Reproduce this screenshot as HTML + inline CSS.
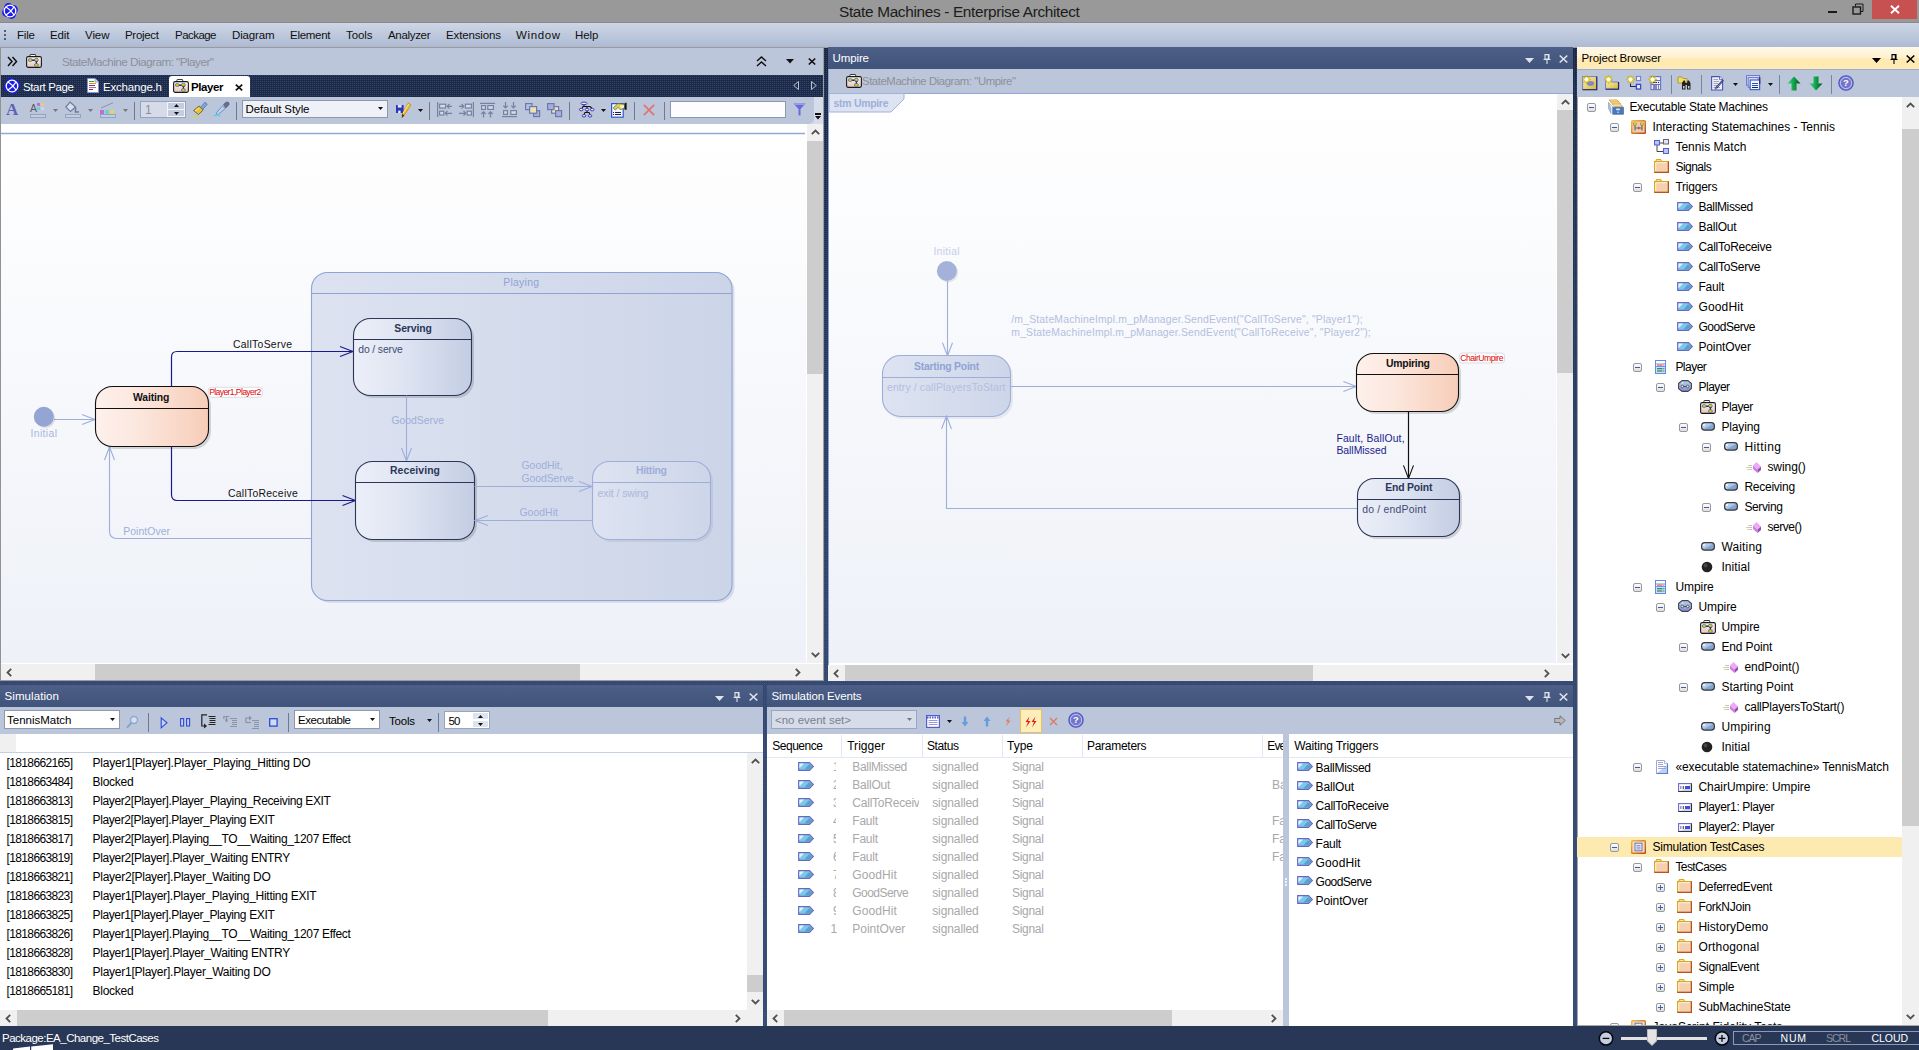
<!DOCTYPE html>
<html><head><meta charset="utf-8"><title>State Machines - Enterprise Architect</title>
<style>
*{box-sizing:border-box;margin:0;padding:0}
html,body{width:1919px;height:1050px;overflow:hidden;background:#31497a;font-family:"Liberation Sans",sans-serif;font-size:12px;color:#000}
.a{position:absolute}
.t{position:absolute;white-space:nowrap;line-height:1}
.dots{background-color:#1b2743;background-image:linear-gradient(90deg,transparent 50%,#1b2743 50%),linear-gradient(0deg,#32446a 50%,#1b2743 50%);background-size:2px 2px}
.dotov{background-image:linear-gradient(90deg,rgba(78,104,158,.42) 50%,transparent 50%);background-size:2px 2px;-webkit-mask-image:linear-gradient(0deg,#000 50%,transparent 50%);-webkit-mask-size:2px 2px;mask-image:linear-gradient(0deg,#000 50%,transparent 50%);mask-size:2px 2px}
svg{overflow:visible}
</style></head><body>
<div class="a" style="left:0;top:48px;width:1919px;height:978px;background:linear-gradient(#1b2743,#1e2d4c 6%,#2a3d64 38%,#33476f 66%,#364b74)"></div><div class="a dotov" style="left:0;top:48px;width:1919px;height:978px"></div>
<div class="a" style="left:0px;top:0px;width:1919px;height:23px;background:#999999;border-bottom:1px solid #8a8a8a"></div><svg class="a" style="left:2px;top:3px" width="16" height="16" viewBox="0 0 16 16"><circle cx="6.6" cy="4.6" r="4.5" fill="#1c1cf0"/><circle cx="11.4" cy="6.6" r="4.5" fill="#1c1cf0"/><circle cx="9.4" cy="11.4" r="4.5" fill="#1c1cf0"/><circle cx="4.6" cy="9.4" r="4.5" fill="#1c1cf0"/><circle cx="8" cy="8" r="6.6" fill="#1c1cf0"/><g fill="none" stroke="#fff" stroke-width="1.3"><circle cx="8" cy="8" r="5.8"/><path d="M4 4Q8.4 6.4 12 12M12 4Q9.6 8.4 4 12"/></g></svg><div class="t" style="left:839px;top:4px;font-size:15.4px;color:#1c1c1c;letter-spacing:-0.343px;">State Machines - Enterprise Architect</div><div class="a" style="left:1828px;top:11px;width:9px;height:2px;background:#1a1a1a;"></div><svg class="a" style="left:1852px;top:3px;" width="12" height="12" viewBox="0 0 12 12"><path d="M3.5 3.5V1H11V8.5H8.5" fill="none" stroke="#1a1a1a" stroke-width="1"/><rect x="1" y="4" width="7.5" height="7" fill="none" stroke="#1a1a1a" stroke-width="1.4"/></svg><div class="a" style="left:1872px;top:0px;width:45px;height:19px;background:#c75050;"></div><svg class="a" style="left:1890px;top:5px;" width="10" height="9" viewBox="0 0 10 9"><path d="M1 0.8L9 8.2M9 0.8L1 8.2" stroke="#fff" stroke-width="1.9"/></svg><div class="a" style="left:0px;top:23px;width:1919px;height:24px;background:linear-gradient(#ced6e6,#bcc7dc 55%,#adbad2);"></div><div class="a" style="left:0px;top:47px;width:1919px;height:1px;background:#9a9a9e;"></div><div class="a" style="left:4px;top:30px;width:2px;height:2px;background:#4f5b78;"></div><div class="a" style="left:4px;top:34px;width:2px;height:2px;background:#4f5b78;"></div><div class="a" style="left:4px;top:38px;width:2px;height:2px;background:#4f5b78;"></div><div class="t" style="left:17px;top:30px;font-size:11.5px;color:#111;letter-spacing:-0.177px;">File</div><div class="t" style="left:50px;top:30px;font-size:11.5px;color:#111;letter-spacing:-0.106px;">Edit</div><div class="t" style="left:85px;top:30px;font-size:11.5px;color:#111;letter-spacing:-0.073px;">View</div><div class="t" style="left:125px;top:30px;font-size:11.5px;color:#111;letter-spacing:-0.299px;">Project</div><div class="t" style="left:175px;top:30px;font-size:11.5px;color:#111;letter-spacing:-0.542px;">Package</div><div class="t" style="left:232px;top:30px;font-size:11.5px;color:#111;letter-spacing:-0.160px;">Diagram</div><div class="t" style="left:290px;top:30px;font-size:11.5px;color:#111;letter-spacing:-0.281px;">Element</div><div class="t" style="left:346px;top:30px;font-size:11.5px;color:#111;letter-spacing:-0.087px;">Tools</div><div class="t" style="left:388px;top:30px;font-size:11.5px;color:#111;letter-spacing:-0.321px;">Analyzer</div><div class="t" style="left:446px;top:30px;font-size:11.5px;color:#111;letter-spacing:-0.139px;">Extensions</div><div class="t" style="left:516px;top:30px;font-size:11.5px;color:#111;letter-spacing:0.620px;">Window</div><div class="t" style="left:575px;top:30px;font-size:11.5px;color:#111;letter-spacing:-0.051px;">Help</div>
<div class="a" style="left:0px;top:48px;width:823px;height:27px;background:#bbc6da;"></div><svg class="a" style="left:7px;top:56px;" width="10" height="11" viewBox="0 0 10 11"><path d="M1 1L5 5.5L1 10M5.5 1L9.5 5.5L5.5 10" fill="none" stroke="#111" stroke-width="1.5"/></svg><svg class="a" style="left:26px;top:54px;" width="16" height="14" viewBox="0 0 16 14"><defs><linearGradient id="dgi" x1="0" y1="0" x2="0" y2="1"><stop offset="0" stop-color="#fff8f6"/><stop offset="1" stop-color="#e6c2be"/></linearGradient></defs><rect x="3.9" y="0.5" width="5.8" height="2.6" rx="0.6" fill="#fafafa" stroke="#222" stroke-width="0.9"/><rect x="0.6" y="2.6" width="14.8" height="10.8" rx="1.6" fill="url(#dgi)" stroke="#1a1a1a" stroke-width="1.1"/><path d="M5 6.2H10" fill="none" stroke="#111" stroke-width="1.3"/><path d="M8.8 7L12 7L10.4 9Z" fill="#111"/><path d="M10.4 8.5V10.5" stroke="#111" stroke-width="1.2"/><ellipse cx="4.2" cy="6" rx="2" ry="1.5" fill="#d8d400" stroke="#3a5ad0" stroke-width="0.7"/><ellipse cx="10.4" cy="5.8" rx="2" ry="1.5" fill="#d8d400" stroke="#3a5ad0" stroke-width="0.7"/><ellipse cx="10.4" cy="11" rx="2" ry="1.5" fill="#d8d400" stroke="#3a5ad0" stroke-width="0.7"/></svg><div class="t" style="left:62px;top:57px;font-size:11.8px;color:#8c9099;letter-spacing:-0.566px;">StateMachine Diagram: &quot;Player&quot;</div><svg class="a" style="left:756px;top:56px;" width="11" height="11" viewBox="0 0 11 11"><path d="M1 5L5.5 1L10 5M1 10L5.5 6L10 10" fill="none" stroke="#111" stroke-width="1.5"/></svg><svg class="a" style="left:786px;top:59px;" width="8" height="5" viewBox="0 0 8 5"><path d="M0 0H8L4 4.5Z" fill="#111"/></svg><svg class="a" style="left:808px;top:58px;" width="8" height="7" viewBox="0 0 8 7"><path d="M0.8 0.5L7.2 6.5M7.2 0.5L0.8 6.5" stroke="#111" stroke-width="1.7"/></svg><svg class="a" style="left:4px;top:78px" width="16" height="16" viewBox="0 0 16 16"><circle cx="6.6" cy="4.6" r="4.5" fill="#1c1cf0"/><circle cx="11.4" cy="6.6" r="4.5" fill="#1c1cf0"/><circle cx="9.4" cy="11.4" r="4.5" fill="#1c1cf0"/><circle cx="4.6" cy="9.4" r="4.5" fill="#1c1cf0"/><circle cx="8" cy="8" r="6.6" fill="#1c1cf0"/><g fill="none" stroke="#fff" stroke-width="1.3"><circle cx="8" cy="8" r="5.8"/><path d="M4 4Q8.4 6.4 12 12M12 4Q9.6 8.4 4 12"/></g></svg><div class="t" style="left:23px;top:82px;font-size:11.5px;color:#fff;letter-spacing:-0.371px;">Start Page</div><svg class="a" style="left:87px;top:78px;" width="12" height="15" viewBox="0 0 12 15"><path d="M0.5 0.5H8L11.5 4V14.5H0.5Z" fill="#fff" stroke="#8a93c8" stroke-width="1"/><path d="M8 0.5V4H11.5" fill="#dde" stroke="#8a93c8" stroke-width="0.8"/><path d="M2 3.5H7" stroke="#3a3" stroke-width="1"/><path d="M2 5.5H9" stroke="#c9a400" stroke-width="1"/><path d="M2 7.5H8" stroke="#a0208a" stroke-width="1"/><path d="M2 9.5H9" stroke="#888" stroke-width="1"/><path d="M2 11.5H6" stroke="#a0208a" stroke-width="1"/></svg><div class="t" style="left:103px;top:82px;font-size:11.5px;color:#fff;letter-spacing:-0.194px;">Exchange.h</div><div class="a" style="left:169px;top:76px;width:81px;height:21px;background:#fff;border-radius:3px 3px 0 0"></div><svg class="a" style="left:173px;top:79px;" width="16" height="14" viewBox="0 0 16 14"><defs><linearGradient id="dgi" x1="0" y1="0" x2="0" y2="1"><stop offset="0" stop-color="#fff8f6"/><stop offset="1" stop-color="#e6c2be"/></linearGradient></defs><rect x="3.9" y="0.5" width="5.8" height="2.6" rx="0.6" fill="#fafafa" stroke="#222" stroke-width="0.9"/><rect x="0.6" y="2.6" width="14.8" height="10.8" rx="1.6" fill="url(#dgi)" stroke="#1a1a1a" stroke-width="1.1"/><path d="M5 6.2H10" fill="none" stroke="#111" stroke-width="1.3"/><path d="M8.8 7L12 7L10.4 9Z" fill="#111"/><path d="M10.4 8.5V10.5" stroke="#111" stroke-width="1.2"/><ellipse cx="4.2" cy="6" rx="2" ry="1.5" fill="#d8d400" stroke="#3a5ad0" stroke-width="0.7"/><ellipse cx="10.4" cy="5.8" rx="2" ry="1.5" fill="#d8d400" stroke="#3a5ad0" stroke-width="0.7"/><ellipse cx="10.4" cy="11" rx="2" ry="1.5" fill="#d8d400" stroke="#3a5ad0" stroke-width="0.7"/></svg><div class="t" style="left:191px;top:82px;font-size:11.5px;color:#000;letter-spacing:-0.406px;font-weight:bold;">Player</div><svg class="a" style="left:235px;top:84px;" width="8" height="7" viewBox="0 0 8 7"><path d="M0.8 0.6L7.2 6.4M7.2 0.6L0.8 6.4" stroke="#111" stroke-width="1.7"/></svg><svg class="a" style="left:793px;top:81px;" width="6" height="9" viewBox="0 0 6 9"><path d="M5.5 0.5L0.7 4.5L5.5 8.5Z" fill="none" stroke="#c9d0e0" stroke-width="0.9"/></svg><svg class="a" style="left:811px;top:81px;" width="6" height="9" viewBox="0 0 6 9"><path d="M0.5 0.5L5.3 4.5L0.5 8.5Z" fill="none" stroke="#c9d0e0" stroke-width="0.9"/></svg><div class="a" style="left:0px;top:97px;width:823px;height:27px;background:#d6dce9;"></div><div class="a" style="left:0px;top:97px;width:814px;height:27px;background:#bbc6da;border-radius:0 0 5px 0"></div><div class="a" style="left:1px;top:124px;width:806px;height:10px;background:#fff;"></div><div class="t" style="left:6px;top:101px;font-family:'Liberation Serif',serif;font-size:17px;font-weight:bold;color:#5c62b4">A</div><div class="t" style="left:30px;top:103px;font-size:10.5px;color:#565b6a;">A</div><div class="a" style="left:37px;top:103px;width:3px;height:3px;background:#c56ad0;"></div><div class="a" style="left:41px;top:103px;width:3px;height:3px;background:#e3d36c;"></div><div class="a" style="left:37px;top:107px;width:3px;height:3px;background:#6cd0d8;"></div><div class="a" style="left:41px;top:107px;width:3px;height:3px;background:#c9d7e8;"></div><div class="a" style="left:30px;top:114px;width:16px;height:4px;background:#c3cde2;border:1px solid #96a3bf"></div><svg class="a" style="left:53px;top:109px;" width="5" height="3" viewBox="0 0 5 3"><path d="M0 0H5 L2.5 3Z" fill="#777"/></svg><svg class="a" style="left:65px;top:101px;" width="16" height="13" viewBox="0 0 16 13"><path d="M5 1L10.5 6L5.5 10.5L0.8 6Z" fill="#d8e0ee" stroke="#6f7c9c" stroke-width="1.2"/><path d="M10.5 6V11H14" fill="none" stroke="#6f7c9c" stroke-width="1.6"/></svg><div class="a" style="left:65px;top:114px;width:16px;height:4px;background:#c3cde2;border:1px solid #96a3bf"></div><svg class="a" style="left:88px;top:109px;" width="5" height="3" viewBox="0 0 5 3"><path d="M0 0H5 L2.5 3Z" fill="#777"/></svg><svg class="a" style="left:100px;top:102px;" width="16" height="12" viewBox="0 0 16 12"><path d="M1 6L13 0.8" stroke="#8a94ac" stroke-width="1"/><rect x="0" y="8" width="4" height="4" fill="#c56ad0"/><rect x="5" y="8" width="4" height="4" fill="#6cd0d8"/><rect x="10" y="8" width="4" height="4" fill="#e3d36c"/></svg><div class="a" style="left:100px;top:114px;width:16px;height:4px;background:#c3cde2;border:1px solid #96a3bf"></div><svg class="a" style="left:123px;top:109px;" width="5" height="3" viewBox="0 0 5 3"><path d="M0 0H5 L2.5 3Z" fill="#777"/></svg><div class="a" style="left:134px;top:102px;width:1px;height:18px;background:#6f7a92;"></div><div class="a" style="left:140px;top:101px;width:46px;height:17px;background:#d5dbe9;border:1px solid #98a2b8"></div><div class="t" style="left:145px;top:104px;font-size:12px;color:#8b8f98;">1</div><div class="a" style="left:167px;top:102px;width:18px;height:8px;background:#c4cde0;border:1px solid #f4f6fb"></div><div class="a" style="left:167px;top:109px;width:18px;height:8px;background:#c4cde0;border:1px solid #f4f6fb"></div><svg class="a" style="left:174px;top:104px;" width="5" height="3" viewBox="0 0 5 3"><path d="M0 3H5L2.5 0Z" fill="#111"/></svg><svg class="a" style="left:174px;top:112px;" width="5" height="3" viewBox="0 0 5 3"><path d="M0 0H5L2.5 3Z" fill="#111"/></svg><svg class="a" style="left:191px;top:101px;" width="17" height="17" viewBox="0 0 17 17"><path d="M9.5 6.5L14 1.2L16.2 3.2L11.5 8.8Z" fill="#7fa8e0" stroke="#4a70b8" stroke-width="0.8"/><path d="M2.5 9.5L8.2 5L12.2 9L7.5 13.5Z" fill="#e8c040" stroke="#6a5a20" stroke-width="0.9"/><path d="M4 10L8 7" stroke="#fff0a0" stroke-width="1"/><path d="M0.5 15.5H8" stroke="#e0d820" stroke-width="1.6" stroke-dasharray="1.4 0.8"/></svg><svg class="a" style="left:213px;top:101px;" width="17" height="17" viewBox="0 0 17 17"><path d="M10.5 3.5L13 1.2Q15 0.4 16 2Q16.6 3.8 15 4.8L12.8 7Z" fill="#66708c" stroke="#4a5470" stroke-width="0.6"/><path d="M9.5 4.8L12.2 7.6L5.5 13.2L3.2 13.8L3.8 11.4Z" fill="#b8d4f0" stroke="#5f80b8" stroke-width="0.8"/><path d="M0.8 15.2Q4 12.6 7.4 15.2" fill="none" stroke="#5fd0e0" stroke-width="1.5"/></svg><div class="a" style="left:236px;top:102px;width:1px;height:18px;background:#6f7a92;"></div><div class="a" style="left:242px;top:100px;width:146px;height:18px;background:#eff1f8;border:1px solid #8e98ad"></div><div class="t" style="left:245.5px;top:104px;font-size:11.5px;color:#000;letter-spacing:-0.100px;">Default Style</div><svg class="a" style="left:378px;top:107px;" width="5" height="3" viewBox="0 0 5 3"><path d="M0 0H5 L2.5 3Z" fill="#111"/></svg><svg class="a" style="left:395px;top:102px;" width="17" height="17" viewBox="0 0 17 17"><rect x="1" y="3" width="7.6" height="8" fill="#2a34b8"/><rect x="2.8" y="3" width="3.8" height="2.6" fill="#dfe4ff"/><rect x="3.2" y="8.6" width="2.4" height="2.4" fill="#eef0ff"/><path d="M13.3 1L16 2.8L9.3 13.2L7 15.8L7.2 12Z" fill="#f5c020" stroke="#b07a10" stroke-width="0.6"/><path d="M7.2 12L9.3 13.2L7 15.8Z" fill="#3a2a10"/><path d="M13.6 2.2L8.2 11" stroke="#fff0a0" stroke-width="0.9"/></svg><svg class="a" style="left:418px;top:109px;" width="5" height="3" viewBox="0 0 5 3"><path d="M0 0H5 L2.5 3Z" fill="#111"/></svg><div class="a" style="left:429px;top:102px;width:1px;height:18px;background:#6f7a92;"></div><svg class="a" style="left:437px;top:102px;" width="16" height="16" viewBox="0 0 16 16"><path d="M0.6 0V15" stroke="#7680a0" stroke-width="1.2" fill="none"/><rect x="2.6" y="2.2" width="6" height="3.8" fill="#d3dbec" stroke="#7680a0" stroke-width="1.2"/><rect x="2.6" y="9.2" width="4.2" height="3.8" fill="#d3dbec" stroke="#7680a0" stroke-width="1.2"/><path d="M15 4.3H10.5M12.5 2L10.2 4.3L12.5 6.6M15 11.3H8.5M10.5 9L8.2 11.3L10.5 13.6" stroke="#7680a0" stroke-width="1.2" fill="none"/></svg><svg class="a" style="left:458px;top:102px;" width="16" height="16" viewBox="0 0 16 16"><path d="M15.4 0V15" stroke="#7680a0" stroke-width="1.2" fill="none"/><rect x="7.4" y="2.2" width="6" height="3.8" fill="#d3dbec" stroke="#7680a0" stroke-width="1.2"/><rect x="9.2" y="9.2" width="4.2" height="3.8" fill="#d3dbec" stroke="#7680a0" stroke-width="1.2"/><path d="M1 4.3H5.5M3.5 2L5.8 4.3L3.5 6.6M1 11.3H7.5M5.5 9L7.8 11.3L5.5 13.6" stroke="#7680a0" stroke-width="1.2" fill="none"/></svg><svg class="a" style="left:480px;top:102px;" width="16" height="16" viewBox="0 0 16 16"><path d="M0 1.4H15" stroke="#7680a0" stroke-width="1.2" fill="none"/><rect x="1.6" y="3.6" width="3.8" height="3.8" fill="#d3dbec" stroke="#7680a0" stroke-width="1.2"/><rect x="7.8" y="3.6" width="5.6" height="3.8" fill="#d3dbec" stroke="#7680a0" stroke-width="1.2"/><path d="M3.5 15.5V10M1.3 12L3.5 9.8L5.7 12M10.5 15.5V10M8.3 12L10.5 9.8L12.7 12" stroke="#7680a0" stroke-width="1.2" fill="none"/></svg><svg class="a" style="left:502px;top:102px;" width="16" height="16" viewBox="0 0 16 16"><path d="M0 14.6H15" stroke="#7680a0" stroke-width="1.2" fill="none"/><rect x="1.6" y="8.6" width="3.8" height="3.8" fill="#d3dbec" stroke="#7680a0" stroke-width="1.2"/><rect x="8.8" y="8.6" width="5.6" height="3.8" fill="#d3dbec" stroke="#7680a0" stroke-width="1.2"/><path d="M3.5 0V5.6M1.3 3.6L3.5 5.8L5.7 3.6M11.5 0V5.6M9.3 3.6L11.5 5.8L13.7 3.6" stroke="#7680a0" stroke-width="1.2" fill="none"/></svg><svg class="a" style="left:525px;top:103px;" width="16" height="15" viewBox="0 0 16 15"><rect x="0.6" y="0.6" width="6.4" height="6" fill="#b4c0e4" stroke="#6f76b0" stroke-width="1.2"/><rect x="8.6" y="7.6" width="6" height="6" fill="#a4b0dc" stroke="#6f76b0" stroke-width="1.2"/><rect x="4.6" y="3.6" width="7" height="6.6" fill="#ece4b0" stroke="#6f76b0" stroke-width="1.2"/></svg><svg class="a" style="left:547px;top:103px;" width="16" height="15" viewBox="0 0 16 15"><rect x="4.6" y="3.6" width="7" height="6.6" fill="#ece4b0" stroke="#6f76b0" stroke-width="1.2"/><rect x="0.6" y="0.6" width="6.4" height="6" fill="#a4b0dc" stroke="#6f76b0" stroke-width="1.2"/><rect x="8.6" y="7.6" width="6" height="6" fill="#a4b0dc" stroke="#6f76b0" stroke-width="1.2"/></svg><div class="a" style="left:569px;top:102px;width:1px;height:18px;background:#6f7a92;"></div><svg class="a" style="left:579px;top:102px;" width="16" height="16" viewBox="0 0 16 16"><path d="M5 3V4.5M3 6.5L4 4.5H11L13 6.5M8 4.5V6.5M8 9V10.5M5 12.5L6 10.5H10L11 12.5" fill="none" stroke="#111" stroke-width="1.1"/><ellipse cx="5" cy="1.4" rx="3" ry="1.3" fill="#e8f0ff" stroke="#2a1aa0" stroke-width="0.85"/><ellipse cx="2.2" cy="7.6" rx="1.8" ry="1.25" fill="#e8f0ff" stroke="#2a1aa0" stroke-width="0.85"/><ellipse cx="8" cy="7.6" rx="1.8" ry="1.25" fill="#e8f0ff" stroke="#2a1aa0" stroke-width="0.85"/><ellipse cx="13.2" cy="7.6" rx="1.8" ry="1.25" fill="#e8f0ff" stroke="#2a1aa0" stroke-width="0.85"/><ellipse cx="5" cy="13.8" rx="1.8" ry="1.25" fill="#e8f0ff" stroke="#2a1aa0" stroke-width="0.85"/><ellipse cx="11" cy="13.8" rx="1.8" ry="1.25" fill="#e8f0ff" stroke="#2a1aa0" stroke-width="0.85"/></svg><svg class="a" style="left:601px;top:109px;" width="5" height="3" viewBox="0 0 5 3"><path d="M0 0H5 L2.5 3Z" fill="#111"/></svg><svg class="a" style="left:611px;top:102px;" width="17" height="16" viewBox="0 0 17 16"><rect x="0.6" y="1.6" width="11.6" height="13.6" fill="#f4f6fe" stroke="#2a5ad0" stroke-width="1.2"/><path d="M4 10.5H10M4 12.5H10" stroke="#1c1c50" stroke-width="1.1"/><path d="M2 10.5H3M2 12.5H3" stroke="#1c1c50" stroke-width="1.1"/><path d="M2.2 6L6.8 1.6L13.6 2.2V6.2L9.2 7.6L7 5.4L4.4 8Z" fill="#d8d060" stroke="#6a6420" stroke-width="0.7"/><path d="M9 3L13 3.4V5.6L10 6.4Z" fill="#f8f4c8"/><rect x="13.6" y="0.8" width="2" height="7" fill="#111"/></svg><div class="a" style="left:634px;top:102px;width:1px;height:18px;background:#6f7a92;"></div><svg class="a" style="left:643px;top:104px;" width="12" height="12" viewBox="0 0 12 12"><path d="M0.8 0.8L11.2 11.2M11.2 0.8L0.8 11.2" stroke="#e07272" stroke-width="1.7"/></svg><div class="a" style="left:664px;top:102px;width:1px;height:18px;background:#6f7a92;"></div><div class="a" style="left:670px;top:101px;width:116px;height:17px;background:#fdfdff;border:1px solid #8e98ad"></div><svg class="a" style="left:793px;top:103px;" width="13" height="13" viewBox="0 0 13 13"><path d="M0.5 0.5H12.5L7.5 6V12.5H5.5V6Z" fill="#6a6ad8"/><path d="M0.5 0.5H12.5L11 2H2Z" fill="#9a9aee"/></svg><div class="a" style="left:815px;top:113px;width:6px;height:1.5px;background:#111;"></div><svg class="a" style="left:815px;top:116px;" width="6" height="4" viewBox="0 0 6 4"><path d="M0 0H6L3 3.5Z" fill="#111"/></svg><div class="a" style="left:0px;top:48px;width:1px;height:633px;background:#929292;"></div>
<div class="a" style="left:1px;top:124px;width:805px;height:539px;background:linear-gradient(#ffffff,#eef1f8);"></div>
<div class="a" style="left:806px;top:124px;width:1px;height:539px;background:#fff;"></div>
<div class="a" style="left:807px;top:124px;width:16px;height:539px;background:#f0f0f0;"></div><div class="a" style="left:807px;top:141px;width:16px;height:233px;background:#cdcdcd;"></div><svg class="a" style="left:810.5px;top:129px;" width="9" height="6" viewBox="0 0 9 6"><path d="M0.8 5.2L4.5 1.5L8.2 5.2" fill="none" stroke="#505050" stroke-width="1.8"/></svg><svg class="a" style="left:810.5px;top:652px;" width="9" height="6" viewBox="0 0 9 6"><path d="M0.8 0.8L4.5 4.5L8.2 0.8" fill="none" stroke="#505050" stroke-width="1.8"/></svg>
<div class="a" style="left:1px;top:663px;width:822px;height:1px;background:#fff;"></div>
<div class="a" style="left:1px;top:664px;width:806px;height:16px;background:#f0f0f0;"></div><div class="a" style="left:95px;top:664px;width:485px;height:16px;background:#cdcdcd;"></div><svg class="a" style="left:6px;top:667.5px;" width="6" height="9" viewBox="0 0 6 9"><path d="M5.2 0.8L1.5 4.5L5.2 8.2" fill="none" stroke="#505050" stroke-width="1.8"/></svg><svg class="a" style="left:795px;top:667.5px;" width="6" height="9" viewBox="0 0 6 9"><path d="M0.8 0.8L4.5 4.5L0.8 8.2" fill="none" stroke="#505050" stroke-width="1.8"/></svg>
<div class="a" style="left:807px;top:664px;width:16px;height:16px;background:#f0f0f0;"></div>
<div class="a" style="left:823px;top:48px;width:1px;height:633px;background:#9c9c9c;"></div>
<div class="a" style="left:0px;top:680px;width:824px;height:1px;background:#9c9c9c;"></div>
<svg class="a" style="left:0;top:124px;font-family:'Liberation Sans',sans-serif" width="806" height="539" viewBox="0 124 806 539"><defs>
<linearGradient id="gp" x1="0" x2="1" y1="0" y2="0"><stop offset="0" stop-color="#fdf0eb"/><stop offset="0.35" stop-color="#fce8df"/><stop offset="1" stop-color="#f7cdb8"/></linearGradient>
<linearGradient id="gb" x1="0" x2="1" y1="0" y2="0"><stop offset="0" stop-color="#eceff8"/><stop offset="0.4" stop-color="#dfe5f2"/><stop offset="1" stop-color="#c3cde3"/></linearGradient>
<linearGradient id="gf" x1="0" x2="1" y1="0" y2="0"><stop offset="0" stop-color="#dde3f1"/><stop offset="1" stop-color="#cdd6e9"/></linearGradient>
<linearGradient id="gpl" x1="0" x2="1" y1="0" y2="0"><stop offset="0" stop-color="#dce2f0"/><stop offset="1" stop-color="#ccd5e8"/></linearGradient>
</defs><path d="M1 133.5H805" stroke="#93a8d8" stroke-width="1.4"/><rect x="313.8" y="274.8" width="420.7" height="328" rx="16" fill="#8090c0" opacity="0.25"/><rect x="311.5" y="272.5" width="420.5" height="328" rx="16" fill="url(#gpl)" stroke="#8fa3d4" stroke-width="1.1"/><path d="M311.5 293.5H732" stroke="#8fa3d4" stroke-width="1"/><text x="503.3" y="285.6" font-size="10.4" fill="#8fa3d4" letter-spacing="0.265">Playing</text><path d="M311 538.5H117Q109.5 538.5 109.5 531V447" fill="none" stroke="#9eaedb" stroke-width="1.1"/><path d="M104.5 460L109.5 447L114.5 460" fill="none" stroke="#9eaedb" stroke-width="1.1"/><text x="123.3" y="535.1" font-size="10.4" fill="#9eaedb" letter-spacing="0.057">PointOver</text><path d="M54 419.5H95" stroke="#9eaedb" stroke-width="1.1"/><path d="M82 414.5L95 419.5L82 424.5" fill="none" stroke="#9eaedb" stroke-width="1.1"/><circle cx="45.3" cy="418.3" r="10" fill="#000" opacity="0.1"/><circle cx="43.8" cy="416.8" r="10" fill="#94a5d3"/><text x="30.5" y="437.1" font-size="10.4" fill="#aab7da" letter-spacing="0.370">Initial</text><rect x="98" y="389" width="113" height="60" rx="17" fill="#000" opacity="0.14"/><rect x="95.5" y="386.5" width="113" height="60" rx="17" fill="url(#gp)" stroke="#111" stroke-width="1.1"/><path d="M95.5 408.5H208.5" stroke="#111" stroke-width="1.1"/><text x="133" y="400.6" font-size="10.4" fill="#111" letter-spacing="-0.144" font-weight="bold">Waiting</text><rect x="208.2" y="387.3" width="54.1" height="10" rx="3" fill="#fff" stroke="#dcdce4" stroke-width="1"/><text x="209.2" y="395.1" font-size="8.6" fill="#dc0808" letter-spacing="-0.615">Player1,Player2</text><path d="M171.5 386.5V357Q171.5 351.5 177 351.5H352.8" fill="none" stroke="#1a1a8c" stroke-width="1.2"/><path d="M340 346.5L353 351.5L340 356.5" fill="none" stroke="#1a1a8c" stroke-width="1.1"/><text x="233" y="347.6" font-size="10.4" fill="#111" letter-spacing="0.293">CallToServe</text><path d="M171.5 446.5V494.5Q171.5 500.5 177 500.5H355.4" fill="none" stroke="#1a1a8c" stroke-width="1.2"/><path d="M342.5 495.5L355.5 500.5L342.5 505.5" fill="none" stroke="#1a1a8c" stroke-width="1.1"/><text x="228" y="496.6" font-size="10.4" fill="#111" letter-spacing="0.277">CallToReceive</text><rect x="356" y="321" width="118" height="77" rx="17" fill="#000" opacity="0.14"/><rect x="353.5" y="318.5" width="118" height="77" rx="17" fill="url(#gb)" stroke="#2b3658" stroke-width="1.1"/><path d="M353.5 339.5H471.5" stroke="#2b3658" stroke-width="1.1"/><text x="394.3" y="331.6" font-size="10.4" fill="#2b3658" letter-spacing="-0.075" font-weight="bold">Serving</text><text x="358.3" y="353.2" font-size="10.4" fill="#3d4a75" letter-spacing="-0.130">do / serve</text><path d="M406.5 395.5V460.5" stroke="#9eaedb" stroke-width="1.1"/><path d="M401.5 448L406.5 461L411.5 448" fill="none" stroke="#9eaedb" stroke-width="1.1"/><text x="391.5" y="424.2" font-size="10.4" fill="#9eaedb" letter-spacing="-0.014">GoodServe</text><rect x="358" y="464" width="119" height="78" rx="17" fill="#000" opacity="0.14"/><rect x="355.5" y="461.5" width="119" height="78" rx="17" fill="url(#gb)" stroke="#2b3658" stroke-width="1.1"/><path d="M355.5 482.5H474.5" stroke="#2b3658" stroke-width="1.1"/><text x="390" y="474.2" font-size="10.4" fill="#2b3658" letter-spacing="0.109" font-weight="bold">Receiving</text><rect x="595" y="464" width="118" height="78" rx="17" fill="#000" opacity="0.06"/><rect x="592.5" y="461.5" width="118" height="78" rx="17" fill="url(#gf)" stroke="#9eaedb" stroke-width="1.1"/><path d="M592.5 482.5H710.5" stroke="#9eaedb" stroke-width="1.1"/><text x="636" y="474.2" font-size="10.4" fill="#9eaedb" letter-spacing="-0.354" font-weight="bold">Hitting</text><text x="597.6" y="496.5" font-size="10.4" fill="#aab7da" letter-spacing="-0.031">exit / swing</text><path d="M474.5 486.5H592" stroke="#9eaedb" stroke-width="1.1"/><path d="M579 481.5L592 486.5L579 491.5" fill="none" stroke="#9eaedb" stroke-width="1.1"/><text x="521.5" y="469.2" font-size="10.4" fill="#9eaedb" letter-spacing="0.008">GoodHit,</text><text x="521.5" y="481.6" font-size="10.4" fill="#9eaedb" letter-spacing="-0.064">GoodServe</text><path d="M474.5 520.5H592" stroke="#9eaedb" stroke-width="1.1"/><path d="M488 515.5L475 520.5L488 525.5" fill="none" stroke="#9eaedb" stroke-width="1.1"/><text x="519.4" y="516.3" font-size="10.4" fill="#9eaedb" letter-spacing="0.075">GoodHit</text></svg>
<div class="a" style="left:828px;top:47px;width:745px;height:22px;background:linear-gradient(#4d5f86,#40537b);"></div><div class="a" style="left:828px;top:69px;width:1px;height:612px;background:#8ea2d2;"></div><div class="t" style="left:832.5px;top:53px;font-size:11.5px;color:#fff;letter-spacing:-0.112px;">Umpire</div><svg class="a" style="left:1525px;top:58px;" width="9" height="5" viewBox="0 0 9 5"><path d="M0 0H9L4.5 5Z" fill="#dfe3ec"/></svg><svg class="a" style="left:1543px;top:54px;" width="8" height="10" viewBox="0 0 8 10"><path d="M2 0.6H6V5H2Z M0.5 5.5H7.5 M4 5.5V10" fill="none" stroke="#dfe3ec" stroke-width="1.1"/><path d="M5.4 0.6V5" stroke="#dfe3ec" stroke-width="1.2"/></svg><svg class="a" style="left:1559px;top:55px;" width="9" height="8" viewBox="0 0 9 8"><path d="M0.7 0.5L8.3 7.5M8.3 0.5L0.7 7.5" stroke="#dfe3ec" stroke-width="1.6"/></svg><div class="a" style="left:829px;top:69px;width:744px;height:24px;background:#bbc6da;"></div><div class="a" style="left:829px;top:93px;width:744px;height:1px;background:#93a8d8;"></div><svg class="a" style="left:846px;top:74px;" width="16" height="14" viewBox="0 0 16 14"><defs><linearGradient id="dgi" x1="0" y1="0" x2="0" y2="1"><stop offset="0" stop-color="#fff8f6"/><stop offset="1" stop-color="#e6c2be"/></linearGradient></defs><rect x="3.9" y="0.5" width="5.8" height="2.6" rx="0.6" fill="#fafafa" stroke="#222" stroke-width="0.9"/><rect x="0.6" y="2.6" width="14.8" height="10.8" rx="1.6" fill="url(#dgi)" stroke="#1a1a1a" stroke-width="1.1"/><path d="M5 6.2H10" fill="none" stroke="#111" stroke-width="1.3"/><path d="M8.8 7L12 7L10.4 9Z" fill="#111"/><path d="M10.4 8.5V10.5" stroke="#111" stroke-width="1.2"/><ellipse cx="4.2" cy="6" rx="2" ry="1.5" fill="#d8d400" stroke="#3a5ad0" stroke-width="0.7"/><ellipse cx="10.4" cy="5.8" rx="2" ry="1.5" fill="#d8d400" stroke="#3a5ad0" stroke-width="0.7"/><ellipse cx="10.4" cy="11" rx="2" ry="1.5" fill="#d8d400" stroke="#3a5ad0" stroke-width="0.7"/></svg><div class="t" style="left:862px;top:76px;font-size:11.3px;color:#8c9099;letter-spacing:-0.402px;">StateMachine Diagram: &quot;Umpire&quot;</div><div class="a" style="left:829px;top:94px;width:727px;height:570px;background:linear-gradient(#ffffff,#eef1f8);"></div><div class="a" style="left:1556px;top:94px;width:1px;height:570px;background:#fff;"></div><div class="a" style="left:1557px;top:94px;width:16px;height:570px;background:#f0f0f0;"></div><div class="a" style="left:1557px;top:110px;width:16px;height:263px;background:#cdcdcd;"></div><svg class="a" style="left:1560.5px;top:99px;" width="9" height="6" viewBox="0 0 9 6"><path d="M0.8 5.2L4.5 1.5L8.2 5.2" fill="none" stroke="#505050" stroke-width="1.8"/></svg><svg class="a" style="left:1560.5px;top:653px;" width="9" height="6" viewBox="0 0 9 6"><path d="M0.8 0.8L4.5 4.5L8.2 0.8" fill="none" stroke="#505050" stroke-width="1.8"/></svg><div class="a" style="left:829px;top:663px;width:744px;height:2px;background:#fff;"></div><div class="a" style="left:828px;top:665px;width:728px;height:16px;background:#f0f0f0;"></div><div class="a" style="left:845px;top:665px;width:468px;height:16px;background:#cdcdcd;"></div><svg class="a" style="left:833px;top:668.5px;" width="6" height="9" viewBox="0 0 6 9"><path d="M5.2 0.8L1.5 4.5L5.2 8.2" fill="none" stroke="#505050" stroke-width="1.8"/></svg><svg class="a" style="left:1544px;top:668.5px;" width="6" height="9" viewBox="0 0 6 9"><path d="M0.8 0.8L4.5 4.5L0.8 8.2" fill="none" stroke="#505050" stroke-width="1.8"/></svg><div class="a" style="left:1556px;top:665px;width:17px;height:16px;background:#f0f0f0;"></div>
<svg class="a" style="left:829px;top:93px;font-family:'Liberation Sans',sans-serif" width="727" height="571" viewBox="829 93 727 571"><defs>
<linearGradient id="gp" x1="0" x2="1" y1="0" y2="0"><stop offset="0" stop-color="#fdf0eb"/><stop offset="0.35" stop-color="#fce8df"/><stop offset="1" stop-color="#f7cdb8"/></linearGradient>
<linearGradient id="gb" x1="0" x2="1" y1="0" y2="0"><stop offset="0" stop-color="#eceff8"/><stop offset="0.4" stop-color="#dfe5f2"/><stop offset="1" stop-color="#c3cde3"/></linearGradient>
<linearGradient id="gf" x1="0" x2="1" y1="0" y2="0"><stop offset="0" stop-color="#dde3f1"/><stop offset="1" stop-color="#cdd6e9"/></linearGradient>
<linearGradient id="gpl" x1="0" x2="1" y1="0" y2="0"><stop offset="0" stop-color="#dce2f0"/><stop offset="1" stop-color="#ccd5e8"/></linearGradient>
</defs><path d="M829 93.5H904V99L891 112H829Z" fill="#dde3f0" stroke="#9fb2dd" stroke-width="1"/><text x="833.5" y="106.6" font-size="10.4" fill="#9eaedb" letter-spacing="-0.246" font-weight="bold">stm Umpire</text><text x="933.4" y="255.3" font-size="10.4" fill="#c5cde7" letter-spacing="0.320">Initial</text><circle cx="948.4" cy="272.5" r="10" fill="#000" opacity="0.08"/><circle cx="946.9" cy="271" r="10" fill="#a4b2da"/><path d="M947.5 281V355.5" stroke="#9eaedb" stroke-width="1.1"/><path d="M942.5 342.7L947.5 355.7L952.5 342.7" fill="none" stroke="#9eaedb" stroke-width="1.1"/><rect x="885" y="358" width="128" height="61" rx="18" fill="#000" opacity="0.06"/><rect x="882.5" y="355.5" width="128" height="61" rx="18" fill="url(#gf)" stroke="#9eaedb" stroke-width="1.1"/><path d="M882.5 377.5H1010.5" stroke="#9eaedb" stroke-width="1.1"/><text x="914" y="369.5" font-size="10.4" fill="#8fa3d4" letter-spacing="-0.229" font-weight="bold">Starting Point</text><text x="887" y="391.4" font-size="10.4" fill="#b3bfdf" letter-spacing="0.139">entry / callPlayersToStart</text><path d="M1010.5 386.5H1356.4" stroke="#9eaedb" stroke-width="1.1"/><path d="M1343.4 381.5L1356.4 386.5L1343.4 391.5" fill="none" stroke="#9eaedb" stroke-width="1.1"/><text x="1011.3" y="322.8" font-size="10.4" fill="#b3bfdf" letter-spacing="0.183">/m_StateMachineImpl.m_pManager.SendEvent(&quot;CallToServe&quot;, &quot;Player1&quot;);</text><text x="1011.3" y="335.6" font-size="10.4" fill="#b3bfdf" letter-spacing="0.187">m_StateMachineImpl.m_pManager.SendEvent(&quot;CallToReceive&quot;, &quot;Player2&quot;);</text><rect x="1359" y="356" width="102" height="58" rx="17" fill="#000" opacity="0.14"/><rect x="1356.5" y="353.5" width="102" height="58" rx="17" fill="url(#gp)" stroke="#111" stroke-width="1.1"/><path d="M1356.5 374.5H1458.5" stroke="#111" stroke-width="1.1"/><text x="1386" y="366.8" font-size="10.4" fill="#111" letter-spacing="-0.235" font-weight="bold">Umpiring</text><rect x="1459.3" y="353" width="45.2" height="10" rx="3" fill="#fff" stroke="#dcdce4" stroke-width="1"/><text x="1460.3" y="360.8" font-size="8.6" fill="#dc0808" letter-spacing="-0.507">ChairUmpire</text><path d="M1408.5 411.5V478.4" stroke="#111" stroke-width="1.2"/><path d="M1403.5 465.4L1408.5 478.4L1413.5 465.4" fill="none" stroke="#111" stroke-width="1.1"/><text x="1336.4" y="441.6" font-size="10.4" fill="#1a1a8c" letter-spacing="0.165">Fault, BallOut,</text><text x="1336.4" y="454.3" font-size="10.4" fill="#1a1a8c" letter-spacing="-0.021">BallMissed</text><path d="M1357.2 508.5H946.5V416" fill="none" stroke="#9eaedb" stroke-width="1.1"/><path d="M941.5 429L946.5 416L951.5 429" fill="none" stroke="#9eaedb" stroke-width="1.1"/><rect x="1360" y="481" width="102" height="58" rx="17" fill="#000" opacity="0.14"/><rect x="1357.5" y="478.5" width="102" height="58" rx="17" fill="url(#gb)" stroke="#2b3658" stroke-width="1.1"/><path d="M1357.5 499.5H1459.5" stroke="#2b3658" stroke-width="1.1"/><text x="1385.3" y="491.3" font-size="10.4" fill="#2b3658" letter-spacing="-0.179" font-weight="bold">End Point</text><text x="1362.2" y="513.3" font-size="10.4" fill="#3d4a75" letter-spacing="0.225">do / endPoint</text></svg>
<div class="a" style="left:1577px;top:47px;width:342px;height:22px;background:linear-gradient(#fff9ea,#fff1cf 48%,#feeab2 52%,#feeab2);"></div><div class="a" style="left:1577px;top:69px;width:342px;height:1px;background:#9fadca;"></div><div class="t" style="left:1581.5px;top:53px;font-size:11.5px;color:#000;letter-spacing:-0.119px;">Project Browser</div><svg class="a" style="left:1872px;top:58px;" width="9" height="5" viewBox="0 0 9 5"><path d="M0 0H9L4.5 5Z" fill="#000"/></svg><svg class="a" style="left:1890px;top:54px;" width="8" height="10" viewBox="0 0 8 10"><path d="M2 0.6H6V5H2Z M0.5 5.5H7.5 M4 5.5V10" fill="none" stroke="#000" stroke-width="1.1"/><path d="M5.4 0.6V5" stroke="#000" stroke-width="1.2"/></svg><svg class="a" style="left:1906px;top:55px;" width="9" height="8" viewBox="0 0 9 8"><path d="M0.7 0.5L8.3 7.5M8.3 0.5L0.7 7.5" stroke="#000" stroke-width="1.6"/></svg><div class="a" style="left:1577px;top:70px;width:342px;height:27px;background:#bbc6da;"></div><svg class="a" style="left:1582px;top:75px;" width="16" height="16" viewBox="0 0 16 16"><defs><linearGradient id="yg" x1="0" y1="0" x2="1" y2="1"><stop offset="0" stop-color="#fbf6b8"/><stop offset="1" stop-color="#d4b830"/></linearGradient></defs><rect x="0.6" y="1.6" width="14" height="13" fill="url(#yg)" stroke="#7878d0" stroke-width="1"/><path d="M0.6 14.8H14.8V1.6" fill="none" stroke="#22225a" stroke-width="1.1"/><ellipse cx="8.5" cy="8.5" rx="3.6" ry="2.4" fill="#8a84d0"/><path d="M4.5 0L5.4 2.4L7.7 1.3L6.6 3.6L9 4.5L6.6 5.4L7.7 7.7L5.4 6.6L4.5 9L3.6 6.6L1.3 7.7L2.4 5.4L0 4.5L2.4 3.6L1.3 1.3L3.6 2.4Z" fill="#f0dc20" stroke="#b89c00" stroke-width="0.4"/><circle cx="4.5" cy="4.5" r="2" fill="#fff"/></svg><svg class="a" style="left:1604px;top:75px;" width="16" height="16" viewBox="0 0 16 16"><path d="M1.6 5.5H7L8.5 7H14.4V14H1.6Z" fill="url(#yg)" stroke="#7878d0" stroke-width="1"/><path d="M1.6 14.2H14.6V7" fill="none" stroke="#22225a" stroke-width="1.1"/><path d="M4.5 0L5.4 2.4L7.7 1.3L6.6 3.6L9 4.5L6.6 5.4L7.7 7.7L5.4 6.6L4.5 9L3.6 6.6L1.3 7.7L2.4 5.4L0 4.5L2.4 3.6L1.3 1.3L3.6 2.4Z" fill="#f0dc20" stroke="#b89c00" stroke-width="0.4"/><circle cx="4.5" cy="4.5" r="2" fill="#fff"/></svg><svg class="a" style="left:1626px;top:75px;" width="16" height="16" viewBox="0 0 16 16"><path d="M4.5 7V11.5H10" fill="none" stroke="#22225a" stroke-width="1.1"/><rect x="10.4" y="1.4" width="4.2" height="4.2" fill="#e8eefc" stroke="#7878d0" stroke-width="1"/><rect x="10.4" y="9.4" width="4.2" height="4.6" fill="#e8eefc" stroke="#3848c8" stroke-width="1.3"/><path d="M4.5 0L5.4 2.4L7.7 1.3L6.6 3.6L9 4.5L6.6 5.4L7.7 7.7L5.4 6.6L4.5 9L3.6 6.6L1.3 7.7L2.4 5.4L0 4.5L2.4 3.6L1.3 1.3L3.6 2.4Z" fill="#f0dc20" stroke="#b89c00" stroke-width="0.4"/><circle cx="4.5" cy="4.5" r="2" fill="#fff"/></svg><svg class="a" style="left:1648px;top:75px;" width="16" height="16" viewBox="0 0 16 16"><rect x="3" y="1.6" width="9.6" height="13" fill="#e8eefc" stroke="#6a70c8" stroke-width="1.1"/><path d="M3 5.5H12.6M3 9.5H12.6" stroke="#6a70c8" stroke-width="1"/><path d="M5 7.5H9M5 11H9M5 13H9" stroke="#22225a" stroke-width="1.1"/><path d="M10 7.5H11M10 11H11M10 13H11" stroke="#22225a" stroke-width="1.1"/><path d="M4.5 0L5.4 2.4L7.7 1.3L6.6 3.6L9 4.5L6.6 5.4L7.7 7.7L5.4 6.6L4.5 9L3.6 6.6L1.3 7.7L2.4 5.4L0 4.5L2.4 3.6L1.3 1.3L3.6 2.4Z" fill="#f0dc20" stroke="#b89c00" stroke-width="0.4"/><circle cx="4.5" cy="4.5" r="2" fill="#fff"/></svg><div class="a" style="left:1671px;top:75px;width:1px;height:19px;background:#7a859d;"></div><svg class="a" style="left:1677px;top:75px;" width="17" height="16" viewBox="0 0 17 16"><path d="M1 2H5L6 3.5H10V8H1Z" fill="#f0e060" stroke="#a89020" stroke-width="0.8"/><path d="M5 14.5V8L6.5 5.5H8L8.5 8H10L10.5 5.5H12L13.5 8V14.5H10V10H8.5V14.5Z" fill="#222"/><rect x="6" y="11" width="1.5" height="2.5" fill="#ccc"/><rect x="11" y="11" width="1.5" height="2.5" fill="#ccc"/></svg><div class="a" style="left:1701px;top:75px;width:1px;height:19px;background:#7a859d;"></div><svg class="a" style="left:1711px;top:76px;" width="14" height="15" viewBox="0 0 14 15"><path d="M0.6 0.6H8.5L11.6 3.6V14H0.6Z" fill="#eef0fb" stroke="#4a54b0" stroke-width="1.1"/><path d="M8.5 0.6V3.6H11.6" fill="#fff" stroke="#4a54b0" stroke-width="0.8"/><path d="M2.5 3.5H7M2.5 5.5H8M2.5 7.5H7M2.5 9.5H6M2.5 11.5H9" stroke="#9a9aa8" stroke-width="0.9"/><path d="M12.2 4.2L5 12.2" stroke="#1c2470" stroke-width="2"/><path d="M12 4.4L5.6 11.6" stroke="#c8d0f8" stroke-width="0.6"/><path d="M5 12.2L4.2 13.4" stroke="#3a70e0" stroke-width="1.6"/></svg><svg class="a" style="left:1733px;top:83px;" width="5" height="3" viewBox="0 0 5 3"><path d="M0 0H5 L2.5 3Z" fill="#111"/></svg><svg class="a" style="left:1746px;top:75px;" width="17" height="16" viewBox="0 0 17 16"><rect x="0.6" y="0.6" width="13" height="9.6" fill="#dfe5f8" stroke="#6a72c8" stroke-width="1"/><rect x="2.2" y="2.6" width="10" height="9.6" fill="#dfe5f8" stroke="#6a72c8" stroke-width="1"/><rect x="4.2" y="5" width="9.4" height="9.6" fill="#f4f6fe" stroke="#3a66d0" stroke-width="1.2"/><path d="M6 8.5H12M6 10.5H12" stroke="#3050c0" stroke-width="1"/><path d="M6 12.5H12" stroke="#1c2050" stroke-width="1"/><path d="M13.8 2V9" stroke="#22225a" stroke-width="1"/></svg><svg class="a" style="left:1768px;top:83px;" width="5" height="3" viewBox="0 0 5 3"><path d="M0 0H5 L2.5 3Z" fill="#111"/></svg><div class="a" style="left:1779px;top:75px;width:1px;height:19px;background:#7a859d;"></div><svg class="a" style="left:1787px;top:76px;" width="14" height="15" viewBox="0 0 14 15"><defs><linearGradient id="agr" x1="0" y1="0" x2="1" y2="0"><stop offset="0" stop-color="#38dc80"/><stop offset="0.5" stop-color="#10a048"/><stop offset="1" stop-color="#064e22"/></linearGradient></defs><path d="M7 0.5L13.5 7.5H9.5V14.5H4.5V7.5H0.5Z" fill="url(#agr)"/></svg><svg class="a" style="left:1809px;top:76px;" width="14" height="15" viewBox="0 0 14 15"><path d="M7 14.5L13.5 7.5H9.5V0.5H4.5V7.5H0.5Z" fill="url(#agr)"/></svg><div class="a" style="left:1831px;top:75px;width:1px;height:19px;background:#7a859d;"></div><svg class="a" style="left:1838px;top:75px;" width="16" height="16" viewBox="0 0 16 16"><circle cx="8" cy="8" r="7.2" fill="#7f84d8" stroke="#4a52c0" stroke-width="1.1"/><circle cx="8" cy="8" r="5.6" fill="#7474c8" stroke="#c4c8f4" stroke-width="0.9"/><text x="8" y="11.4" font-size="9.5" font-weight="bold" fill="#fff" text-anchor="middle" font-family="Liberation Sans">?</text></svg><div class="a" style="left:1577px;top:97px;width:325px;height:929px;background:#fff;"></div><div class="a" style="left:1577px;top:97px;width:1px;height:929px;background:#a4a4a4;"></div><div class="a" style="left:0;top:0;width:1902px;height:1026px;overflow:hidden"><svg class="a" style="left:1587px;top:103px;" width="9" height="9" viewBox="0 0 9 9"><defs><linearGradient id="bxg" x1="0" y1="0" x2="0" y2="1"><stop offset="0" stop-color="#fff"/><stop offset="1" stop-color="#dcdcdc"/></linearGradient></defs><rect x="0.5" y="0.5" width="8" height="8" rx="1.5" fill="url(#bxg)" stroke="#999" stroke-width="1"/><path d="M2 4.5H7" stroke="#3f5cb0" stroke-width="1"/></svg><svg class="a" style="left:1608px;top:99px;" width="16" height="16" viewBox="0 0 16 16"><path d="M0.5 3.5L3 9.5V14.5L0.5 9.5Z" fill="#a9bfe2" stroke="#7f9ccc" stroke-width="0.6"/><path d="M1 1H9L11.2 3.2H3.2Z" fill="#fff4d8" stroke="#d9a020" stroke-width="0.9"/><path d="M2.6 3H10.6L12.8 5.2H4.8Z" fill="#fff4d8" stroke="#d9a020" stroke-width="0.9"/><path d="M4.2 5H12.2L14.4 7.2H6.4Z" fill="#fff4d8" stroke="#d9a020" stroke-width="0.9"/><rect x="4.8" y="8.2" width="10.6" height="7" fill="#4a7ab8" stroke="#3a66a8" stroke-width="0.7"/><path d="M0.5 3.5L4.8 8.2" stroke="#7f9ccc" stroke-width="0.7"/><rect x="8.2" y="9.6" width="3.6" height="1.6" fill="#e4ecf8"/><rect x="9.4" y="12.6" width="1.4" height="1.2" fill="#e4ecf8"/></svg><div class="t" style="left:1629.4px;top:101px;font-size:12px;color:#000;letter-spacing:-0.284px;">Executable State Machines</div><svg class="a" style="left:1610px;top:123px;" width="9" height="9" viewBox="0 0 9 9"><defs><linearGradient id="bxg" x1="0" y1="0" x2="0" y2="1"><stop offset="0" stop-color="#fff"/><stop offset="1" stop-color="#dcdcdc"/></linearGradient></defs><rect x="0.5" y="0.5" width="8" height="8" rx="1.5" fill="url(#bxg)" stroke="#999" stroke-width="1"/><path d="M2 4.5H7" stroke="#3f5cb0" stroke-width="1"/></svg><svg class="a" style="left:1631px;top:120px;" width="15" height="14" viewBox="0 0 15 14"><defs><linearGradient id="pkb" x1="0" y1="0" x2="1" y2="1"><stop offset="0" stop-color="#ecc040"/><stop offset="1" stop-color="#b84818"/></linearGradient></defs><rect x="0.7" y="0.7" width="13.6" height="12.6" rx="0.8" fill="#f4c8a8" stroke="url(#pkb)" stroke-width="1.4"/><path d="M4 4.5V10.5M11 4.5V10.5M4 8H11" stroke="#6b6b6b" stroke-width="1.2" fill="none"/><path d="M7 6.3L9.2 8L7 9.7Z" fill="#6b6b6b"/><rect x="2.6" y="3" width="2.8" height="2" fill="#f2e040" stroke="#8a7a2a" stroke-width="0.5"/><rect x="9.6" y="3" width="2.8" height="2" fill="#f2e040" stroke="#8a7a2a" stroke-width="0.5"/></svg><div class="t" style="left:1652.4px;top:121px;font-size:12px;color:#000;letter-spacing:-0.042px;">Interacting Statemachines - Tennis</div><svg class="a" style="left:1654px;top:139px;" width="16" height="16" viewBox="0 0 16 16"><path d="M3 4V12.5H10M3 4H9" fill="none" stroke="#444" stroke-width="1"/><rect x="0.5" y="1.5" width="5" height="4.5" fill="#b7c4f2" stroke="#5560c0" stroke-width="1"/><rect x="9.5" y="0.5" width="5" height="4.5" fill="#dfe5fa" stroke="#666" stroke-width="1"/><rect x="9.5" y="9.5" width="5" height="5" fill="#b7c4f2" stroke="#5560c0" stroke-width="1"/></svg><div class="t" style="left:1675.4px;top:141px;font-size:12px;color:#000;letter-spacing:0.027px;">Tennis Match</div><svg class="a" style="left:1654px;top:159px;" width="15" height="14" viewBox="0 0 15 14"><path d="M1.6 2.4L2.6 0.6H6.6L7.6 2.4" fill="#fff4d8" stroke="#d8a820" stroke-width="1.1"/><rect x="0.6" y="2.6" width="13.8" height="10.8" fill="#f4d0b0" stroke="#d8a820" stroke-width="1.2"/><path d="M0.4 13.4H14.4V2.6" fill="none" stroke="#b85020" stroke-width="1.2"/><path d="M1.7 12V3.7H13" fill="none" stroke="#fff6dc" stroke-width="0.9"/></svg><div class="t" style="left:1675.4px;top:161px;font-size:12px;color:#000;letter-spacing:-0.510px;">Signals</div><svg class="a" style="left:1633px;top:183px;" width="9" height="9" viewBox="0 0 9 9"><defs><linearGradient id="bxg" x1="0" y1="0" x2="0" y2="1"><stop offset="0" stop-color="#fff"/><stop offset="1" stop-color="#dcdcdc"/></linearGradient></defs><rect x="0.5" y="0.5" width="8" height="8" rx="1.5" fill="url(#bxg)" stroke="#999" stroke-width="1"/><path d="M2 4.5H7" stroke="#3f5cb0" stroke-width="1"/></svg><svg class="a" style="left:1654px;top:179px;" width="15" height="14" viewBox="0 0 15 14"><path d="M1.6 2.4L2.6 0.6H6.6L7.6 2.4" fill="#fff4d8" stroke="#d8a820" stroke-width="1.1"/><rect x="0.6" y="2.6" width="13.8" height="10.8" fill="#f4d0b0" stroke="#d8a820" stroke-width="1.2"/><path d="M0.4 13.4H14.4V2.6" fill="none" stroke="#b85020" stroke-width="1.2"/><path d="M1.7 12V3.7H13" fill="none" stroke="#fff6dc" stroke-width="0.9"/></svg><div class="t" style="left:1675.4px;top:181px;font-size:12px;color:#000;letter-spacing:-0.224px;">Triggers</div><svg class="a" style="left:1677px;top:202px;" width="16" height="9" viewBox="0 0 16 9"><path d="M0.7 0.7H11.5L15.3 4.5L11.5 8.3H0.7Z" fill="#7cc8ec" stroke="#6a66c4" stroke-width="1.2"/><path d="M1.4 1.4H6.2L1.4 6.2Z" fill="#dff1fa"/><path d="M6.3 7.6L11 2.3L14.3 4.5L11.2 7.6Z" fill="#5aa0c8"/></svg><div class="t" style="left:1698.4px;top:201px;font-size:12px;color:#000;letter-spacing:-0.358px;">BallMissed</div><svg class="a" style="left:1677px;top:222px;" width="16" height="9" viewBox="0 0 16 9"><path d="M0.7 0.7H11.5L15.3 4.5L11.5 8.3H0.7Z" fill="#7cc8ec" stroke="#6a66c4" stroke-width="1.2"/><path d="M1.4 1.4H6.2L1.4 6.2Z" fill="#dff1fa"/><path d="M6.3 7.6L11 2.3L14.3 4.5L11.2 7.6Z" fill="#5aa0c8"/></svg><div class="t" style="left:1698.4px;top:221px;font-size:12px;color:#000;letter-spacing:-0.175px;">BallOut</div><svg class="a" style="left:1677px;top:242px;" width="16" height="9" viewBox="0 0 16 9"><path d="M0.7 0.7H11.5L15.3 4.5L11.5 8.3H0.7Z" fill="#7cc8ec" stroke="#6a66c4" stroke-width="1.2"/><path d="M1.4 1.4H6.2L1.4 6.2Z" fill="#dff1fa"/><path d="M6.3 7.6L11 2.3L14.3 4.5L11.2 7.6Z" fill="#5aa0c8"/></svg><div class="t" style="left:1698.4px;top:241px;font-size:12px;color:#000;letter-spacing:-0.267px;">CallToReceive</div><svg class="a" style="left:1677px;top:262px;" width="16" height="9" viewBox="0 0 16 9"><path d="M0.7 0.7H11.5L15.3 4.5L11.5 8.3H0.7Z" fill="#7cc8ec" stroke="#6a66c4" stroke-width="1.2"/><path d="M1.4 1.4H6.2L1.4 6.2Z" fill="#dff1fa"/><path d="M6.3 7.6L11 2.3L14.3 4.5L11.2 7.6Z" fill="#5aa0c8"/></svg><div class="t" style="left:1698.4px;top:261px;font-size:12px;color:#000;letter-spacing:-0.270px;">CallToServe</div><svg class="a" style="left:1677px;top:282px;" width="16" height="9" viewBox="0 0 16 9"><path d="M0.7 0.7H11.5L15.3 4.5L11.5 8.3H0.7Z" fill="#7cc8ec" stroke="#6a66c4" stroke-width="1.2"/><path d="M1.4 1.4H6.2L1.4 6.2Z" fill="#dff1fa"/><path d="M6.3 7.6L11 2.3L14.3 4.5L11.2 7.6Z" fill="#5aa0c8"/></svg><div class="t" style="left:1698.4px;top:281px;font-size:12px;color:#000;letter-spacing:-0.170px;">Fault</div><svg class="a" style="left:1677px;top:302px;" width="16" height="9" viewBox="0 0 16 9"><path d="M0.7 0.7H11.5L15.3 4.5L11.5 8.3H0.7Z" fill="#7cc8ec" stroke="#6a66c4" stroke-width="1.2"/><path d="M1.4 1.4H6.2L1.4 6.2Z" fill="#dff1fa"/><path d="M6.3 7.6L11 2.3L14.3 4.5L11.2 7.6Z" fill="#5aa0c8"/></svg><div class="t" style="left:1698.4px;top:301px;font-size:12px;color:#000;letter-spacing:0.163px;">GoodHit</div><svg class="a" style="left:1677px;top:322px;" width="16" height="9" viewBox="0 0 16 9"><path d="M0.7 0.7H11.5L15.3 4.5L11.5 8.3H0.7Z" fill="#7cc8ec" stroke="#6a66c4" stroke-width="1.2"/><path d="M1.4 1.4H6.2L1.4 6.2Z" fill="#dff1fa"/><path d="M6.3 7.6L11 2.3L14.3 4.5L11.2 7.6Z" fill="#5aa0c8"/></svg><div class="t" style="left:1698.4px;top:321px;font-size:12px;color:#000;letter-spacing:-0.463px;">GoodServe</div><svg class="a" style="left:1677px;top:342px;" width="16" height="9" viewBox="0 0 16 9"><path d="M0.7 0.7H11.5L15.3 4.5L11.5 8.3H0.7Z" fill="#7cc8ec" stroke="#6a66c4" stroke-width="1.2"/><path d="M1.4 1.4H6.2L1.4 6.2Z" fill="#dff1fa"/><path d="M6.3 7.6L11 2.3L14.3 4.5L11.2 7.6Z" fill="#5aa0c8"/></svg><div class="t" style="left:1698.4px;top:341px;font-size:12px;color:#000;letter-spacing:-0.107px;">PointOver</div><svg class="a" style="left:1633px;top:363px;" width="9" height="9" viewBox="0 0 9 9"><defs><linearGradient id="bxg" x1="0" y1="0" x2="0" y2="1"><stop offset="0" stop-color="#fff"/><stop offset="1" stop-color="#dcdcdc"/></linearGradient></defs><rect x="0.5" y="0.5" width="8" height="8" rx="1.5" fill="url(#bxg)" stroke="#999" stroke-width="1"/><path d="M2 4.5H7" stroke="#3f5cb0" stroke-width="1"/></svg><svg class="a" style="left:1655px;top:360px;" width="11" height="14" viewBox="0 0 11 14"><rect x="0.5" y="0.5" width="10" height="13" fill="#fff" stroke="#6a86e0" stroke-width="1"/><rect x="1" y="6.5" width="9" height="6.5" fill="#b8ecf4"/><path d="M0.5 4H10.5M0.5 6.5H10.5" stroke="#6a86e0" stroke-width="0.9"/><path d="M2 5.2H7.5" stroke="#e86060" stroke-width="1.1"/><path d="M8.3 5.2H9.3" stroke="#e86060" stroke-width="1.1"/><path d="M2 8.7H7.5M2 11H7.5" stroke="#2f5a40" stroke-width="1.1"/><path d="M8.3 8.7H9.3M8.3 11H9.3" stroke="#2f5a40" stroke-width="1.1"/></svg><div class="t" style="left:1675.4px;top:361px;font-size:12px;color:#000;letter-spacing:-0.523px;">Player</div><svg class="a" style="left:1656px;top:383px;" width="9" height="9" viewBox="0 0 9 9"><defs><linearGradient id="bxg" x1="0" y1="0" x2="0" y2="1"><stop offset="0" stop-color="#fff"/><stop offset="1" stop-color="#dcdcdc"/></linearGradient></defs><rect x="0.5" y="0.5" width="8" height="8" rx="1.5" fill="url(#bxg)" stroke="#999" stroke-width="1"/><path d="M2 4.5H7" stroke="#3f5cb0" stroke-width="1"/></svg><svg class="a" style="left:1678px;top:380px;" width="14" height="12" viewBox="0 0 14 12"><defs><linearGradient id="smg" x1="0" y1="0" x2="0" y2="1"><stop offset="0" stop-color="#b4cdea"/><stop offset="0.6" stop-color="#98aee0"/><stop offset="1" stop-color="#8a84d8"/></linearGradient></defs><path d="M4 0.6H10L13.4 3.5V8.5L10 11.4H4L0.6 8.5V3.5Z" fill="url(#smg)" stroke="#444" stroke-width="1.1" stroke-linejoin="round"/><circle cx="4.3" cy="6.5" r="1.3" fill="#e8eefa" stroke="#333" stroke-width="0.7"/><circle cx="9.7" cy="6.5" r="1.3" fill="#e8eefa" stroke="#333" stroke-width="0.7"/><path d="M5.6 6.5H8.4" stroke="#333" stroke-width="0.8"/><circle cx="4.5" cy="3" r="0.8" fill="#e8f2fc"/></svg><div class="t" style="left:1698.4px;top:381px;font-size:12px;color:#000;letter-spacing:-0.463px;">Player</div><svg class="a" style="left:1700px;top:400px;" width="16" height="14" viewBox="0 0 16 14"><defs><linearGradient id="dgi" x1="0" y1="0" x2="0" y2="1"><stop offset="0" stop-color="#fff8f6"/><stop offset="1" stop-color="#e6c2be"/></linearGradient></defs><rect x="3.9" y="0.5" width="5.8" height="2.6" rx="0.6" fill="#fafafa" stroke="#222" stroke-width="0.9"/><rect x="0.6" y="2.6" width="14.8" height="10.8" rx="1.6" fill="url(#dgi)" stroke="#1a1a1a" stroke-width="1.1"/><path d="M5 6.2H10" fill="none" stroke="#111" stroke-width="1.3"/><path d="M8.8 7L12 7L10.4 9Z" fill="#111"/><path d="M10.4 8.5V10.5" stroke="#111" stroke-width="1.2"/><ellipse cx="4.2" cy="6" rx="2" ry="1.5" fill="#d8d400" stroke="#3a5ad0" stroke-width="0.7"/><ellipse cx="10.4" cy="5.8" rx="2" ry="1.5" fill="#d8d400" stroke="#3a5ad0" stroke-width="0.7"/><ellipse cx="10.4" cy="11" rx="2" ry="1.5" fill="#d8d400" stroke="#3a5ad0" stroke-width="0.7"/></svg><div class="t" style="left:1721.4px;top:401px;font-size:12px;color:#000;letter-spacing:-0.443px;">Player</div><svg class="a" style="left:1679px;top:423px;" width="9" height="9" viewBox="0 0 9 9"><defs><linearGradient id="bxg" x1="0" y1="0" x2="0" y2="1"><stop offset="0" stop-color="#fff"/><stop offset="1" stop-color="#dcdcdc"/></linearGradient></defs><rect x="0.5" y="0.5" width="8" height="8" rx="1.5" fill="url(#bxg)" stroke="#999" stroke-width="1"/><path d="M2 4.5H7" stroke="#3f5cb0" stroke-width="1"/></svg><svg class="a" style="left:1701px;top:422px;" width="14" height="9" viewBox="0 0 14 9"><defs><linearGradient id="stg" x1="0" y1="0" x2="1" y2="1"><stop offset="0" stop-color="#d4e4f6"/><stop offset="0.5" stop-color="#a8c4e8"/><stop offset="0.55" stop-color="#86a8d4"/><stop offset="1" stop-color="#7a9ccc"/></linearGradient></defs><rect x="0.6" y="0.6" width="12.8" height="7.6" rx="3.2" fill="url(#stg)" stroke="#3a3a3a" stroke-width="1.2"/><circle cx="3" cy="3" r="0.9" fill="#fff"/></svg><div class="t" style="left:1721.4px;top:421px;font-size:12px;color:#000;letter-spacing:-0.143px;">Playing</div><svg class="a" style="left:1702px;top:443px;" width="9" height="9" viewBox="0 0 9 9"><defs><linearGradient id="bxg" x1="0" y1="0" x2="0" y2="1"><stop offset="0" stop-color="#fff"/><stop offset="1" stop-color="#dcdcdc"/></linearGradient></defs><rect x="0.5" y="0.5" width="8" height="8" rx="1.5" fill="url(#bxg)" stroke="#999" stroke-width="1"/><path d="M2 4.5H7" stroke="#3f5cb0" stroke-width="1"/></svg><svg class="a" style="left:1724px;top:442px;" width="14" height="9" viewBox="0 0 14 9"><defs><linearGradient id="stg" x1="0" y1="0" x2="1" y2="1"><stop offset="0" stop-color="#d4e4f6"/><stop offset="0.5" stop-color="#a8c4e8"/><stop offset="0.55" stop-color="#86a8d4"/><stop offset="1" stop-color="#7a9ccc"/></linearGradient></defs><rect x="0.6" y="0.6" width="12.8" height="7.6" rx="3.2" fill="url(#stg)" stroke="#3a3a3a" stroke-width="1.2"/><circle cx="3" cy="3" r="0.9" fill="#fff"/></svg><div class="t" style="left:1744.4px;top:441px;font-size:12px;color:#000;letter-spacing:0.414px;">Hitting</div><svg class="a" style="left:1746px;top:462px;" width="16" height="12" viewBox="0 0 16 12"><path d="M2 3.5H6M0 5.5H6M1 7.5H6" stroke="#d0cc9a" stroke-width="0.9"/><path d="M3.5 3.5H6M3 5.5H6M3.5 7.5H6" stroke="#bdbdc8" stroke-width="0.9"/><path d="M10.5 0L15 4.5L11.5 7.5L7 3.5Z" fill="#f0a8f4"/><path d="M7 3.5L11.5 7.5V11L7 7Z" fill="#d080dc"/><path d="M11.5 7.5L15 4.5V8L11.5 11Z" fill="#9050b8"/></svg><div class="t" style="left:1767.4px;top:461px;font-size:12px;color:#000;letter-spacing:-0.062px;">swing()</div><svg class="a" style="left:1724px;top:482px;" width="14" height="9" viewBox="0 0 14 9"><defs><linearGradient id="stg" x1="0" y1="0" x2="1" y2="1"><stop offset="0" stop-color="#d4e4f6"/><stop offset="0.5" stop-color="#a8c4e8"/><stop offset="0.55" stop-color="#86a8d4"/><stop offset="1" stop-color="#7a9ccc"/></linearGradient></defs><rect x="0.6" y="0.6" width="12.8" height="7.6" rx="3.2" fill="url(#stg)" stroke="#3a3a3a" stroke-width="1.2"/><circle cx="3" cy="3" r="0.9" fill="#fff"/></svg><div class="t" style="left:1744.4px;top:481px;font-size:12px;color:#000;letter-spacing:-0.249px;">Receiving</div><svg class="a" style="left:1702px;top:503px;" width="9" height="9" viewBox="0 0 9 9"><defs><linearGradient id="bxg" x1="0" y1="0" x2="0" y2="1"><stop offset="0" stop-color="#fff"/><stop offset="1" stop-color="#dcdcdc"/></linearGradient></defs><rect x="0.5" y="0.5" width="8" height="8" rx="1.5" fill="url(#bxg)" stroke="#999" stroke-width="1"/><path d="M2 4.5H7" stroke="#3f5cb0" stroke-width="1"/></svg><svg class="a" style="left:1724px;top:502px;" width="14" height="9" viewBox="0 0 14 9"><defs><linearGradient id="stg" x1="0" y1="0" x2="1" y2="1"><stop offset="0" stop-color="#d4e4f6"/><stop offset="0.5" stop-color="#a8c4e8"/><stop offset="0.55" stop-color="#86a8d4"/><stop offset="1" stop-color="#7a9ccc"/></linearGradient></defs><rect x="0.6" y="0.6" width="12.8" height="7.6" rx="3.2" fill="url(#stg)" stroke="#3a3a3a" stroke-width="1.2"/><circle cx="3" cy="3" r="0.9" fill="#fff"/></svg><div class="t" style="left:1744.4px;top:501px;font-size:12px;color:#000;letter-spacing:-0.365px;">Serving</div><svg class="a" style="left:1746px;top:522px;" width="16" height="12" viewBox="0 0 16 12"><path d="M2 3.5H6M0 5.5H6M1 7.5H6" stroke="#d0cc9a" stroke-width="0.9"/><path d="M3.5 3.5H6M3 5.5H6M3.5 7.5H6" stroke="#bdbdc8" stroke-width="0.9"/><path d="M10.5 0L15 4.5L11.5 7.5L7 3.5Z" fill="#f0a8f4"/><path d="M7 3.5L11.5 7.5V11L7 7Z" fill="#d080dc"/><path d="M11.5 7.5L15 4.5V8L11.5 11Z" fill="#9050b8"/></svg><div class="t" style="left:1767.4px;top:521px;font-size:12px;color:#000;letter-spacing:-0.456px;">serve()</div><svg class="a" style="left:1701px;top:542px;" width="14" height="9" viewBox="0 0 14 9"><defs><linearGradient id="stg" x1="0" y1="0" x2="1" y2="1"><stop offset="0" stop-color="#d4e4f6"/><stop offset="0.5" stop-color="#a8c4e8"/><stop offset="0.55" stop-color="#86a8d4"/><stop offset="1" stop-color="#7a9ccc"/></linearGradient></defs><rect x="0.6" y="0.6" width="12.8" height="7.6" rx="3.2" fill="url(#stg)" stroke="#3a3a3a" stroke-width="1.2"/><circle cx="3" cy="3" r="0.9" fill="#fff"/></svg><div class="t" style="left:1721.4px;top:541px;font-size:12px;color:#000;letter-spacing:0.155px;">Waiting</div><svg class="a" style="left:1701px;top:561px;" width="12" height="12" viewBox="0 0 12 12"><circle cx="6" cy="6" r="5.3" fill="#222"/><circle cx="4.5" cy="4.5" r="2" fill="#555" opacity="0.7"/></svg><div class="t" style="left:1721.4px;top:561px;font-size:12px;color:#000;letter-spacing:0.098px;">Initial</div><svg class="a" style="left:1633px;top:583px;" width="9" height="9" viewBox="0 0 9 9"><defs><linearGradient id="bxg" x1="0" y1="0" x2="0" y2="1"><stop offset="0" stop-color="#fff"/><stop offset="1" stop-color="#dcdcdc"/></linearGradient></defs><rect x="0.5" y="0.5" width="8" height="8" rx="1.5" fill="url(#bxg)" stroke="#999" stroke-width="1"/><path d="M2 4.5H7" stroke="#3f5cb0" stroke-width="1"/></svg><svg class="a" style="left:1655px;top:580px;" width="11" height="14" viewBox="0 0 11 14"><rect x="0.5" y="0.5" width="10" height="13" fill="#fff" stroke="#6a86e0" stroke-width="1"/><rect x="1" y="6.5" width="9" height="6.5" fill="#b8ecf4"/><path d="M0.5 4H10.5M0.5 6.5H10.5" stroke="#6a86e0" stroke-width="0.9"/><path d="M2 5.2H7.5" stroke="#e86060" stroke-width="1.1"/><path d="M8.3 5.2H9.3" stroke="#e86060" stroke-width="1.1"/><path d="M2 8.7H7.5M2 11H7.5" stroke="#2f5a40" stroke-width="1.1"/><path d="M8.3 8.7H9.3M8.3 11H9.3" stroke="#2f5a40" stroke-width="1.1"/></svg><div class="t" style="left:1675.4px;top:581px;font-size:12px;color:#000;letter-spacing:-0.055px;">Umpire</div><svg class="a" style="left:1656px;top:603px;" width="9" height="9" viewBox="0 0 9 9"><defs><linearGradient id="bxg" x1="0" y1="0" x2="0" y2="1"><stop offset="0" stop-color="#fff"/><stop offset="1" stop-color="#dcdcdc"/></linearGradient></defs><rect x="0.5" y="0.5" width="8" height="8" rx="1.5" fill="url(#bxg)" stroke="#999" stroke-width="1"/><path d="M2 4.5H7" stroke="#3f5cb0" stroke-width="1"/></svg><svg class="a" style="left:1678px;top:600px;" width="14" height="12" viewBox="0 0 14 12"><defs><linearGradient id="smg" x1="0" y1="0" x2="0" y2="1"><stop offset="0" stop-color="#b4cdea"/><stop offset="0.6" stop-color="#98aee0"/><stop offset="1" stop-color="#8a84d8"/></linearGradient></defs><path d="M4 0.6H10L13.4 3.5V8.5L10 11.4H4L0.6 8.5V3.5Z" fill="url(#smg)" stroke="#444" stroke-width="1.1" stroke-linejoin="round"/><circle cx="4.3" cy="6.5" r="1.3" fill="#e8eefa" stroke="#333" stroke-width="0.7"/><circle cx="9.7" cy="6.5" r="1.3" fill="#e8eefa" stroke="#333" stroke-width="0.7"/><path d="M5.6 6.5H8.4" stroke="#333" stroke-width="0.8"/><circle cx="4.5" cy="3" r="0.8" fill="#e8f2fc"/></svg><div class="t" style="left:1698.4px;top:601px;font-size:12px;color:#000;letter-spacing:-0.055px;">Umpire</div><svg class="a" style="left:1700px;top:620px;" width="16" height="14" viewBox="0 0 16 14"><defs><linearGradient id="dgi" x1="0" y1="0" x2="0" y2="1"><stop offset="0" stop-color="#fff8f6"/><stop offset="1" stop-color="#e6c2be"/></linearGradient></defs><rect x="3.9" y="0.5" width="5.8" height="2.6" rx="0.6" fill="#fafafa" stroke="#222" stroke-width="0.9"/><rect x="0.6" y="2.6" width="14.8" height="10.8" rx="1.6" fill="url(#dgi)" stroke="#1a1a1a" stroke-width="1.1"/><path d="M5 6.2H10" fill="none" stroke="#111" stroke-width="1.3"/><path d="M8.8 7L12 7L10.4 9Z" fill="#111"/><path d="M10.4 8.5V10.5" stroke="#111" stroke-width="1.2"/><ellipse cx="4.2" cy="6" rx="2" ry="1.5" fill="#d8d400" stroke="#3a5ad0" stroke-width="0.7"/><ellipse cx="10.4" cy="5.8" rx="2" ry="1.5" fill="#d8d400" stroke="#3a5ad0" stroke-width="0.7"/><ellipse cx="10.4" cy="11" rx="2" ry="1.5" fill="#d8d400" stroke="#3a5ad0" stroke-width="0.7"/></svg><div class="t" style="left:1721.4px;top:621px;font-size:12px;color:#000;letter-spacing:-0.055px;">Umpire</div><svg class="a" style="left:1679px;top:643px;" width="9" height="9" viewBox="0 0 9 9"><defs><linearGradient id="bxg" x1="0" y1="0" x2="0" y2="1"><stop offset="0" stop-color="#fff"/><stop offset="1" stop-color="#dcdcdc"/></linearGradient></defs><rect x="0.5" y="0.5" width="8" height="8" rx="1.5" fill="url(#bxg)" stroke="#999" stroke-width="1"/><path d="M2 4.5H7" stroke="#3f5cb0" stroke-width="1"/></svg><svg class="a" style="left:1701px;top:642px;" width="14" height="9" viewBox="0 0 14 9"><defs><linearGradient id="stg" x1="0" y1="0" x2="1" y2="1"><stop offset="0" stop-color="#d4e4f6"/><stop offset="0.5" stop-color="#a8c4e8"/><stop offset="0.55" stop-color="#86a8d4"/><stop offset="1" stop-color="#7a9ccc"/></linearGradient></defs><rect x="0.6" y="0.6" width="12.8" height="7.6" rx="3.2" fill="url(#stg)" stroke="#3a3a3a" stroke-width="1.2"/><circle cx="3" cy="3" r="0.9" fill="#fff"/></svg><div class="t" style="left:1721.4px;top:641px;font-size:12px;color:#000;letter-spacing:-0.130px;">End Point</div><svg class="a" style="left:1723px;top:662px;" width="16" height="12" viewBox="0 0 16 12"><path d="M2 3.5H6M0 5.5H6M1 7.5H6" stroke="#d0cc9a" stroke-width="0.9"/><path d="M3.5 3.5H6M3 5.5H6M3.5 7.5H6" stroke="#bdbdc8" stroke-width="0.9"/><path d="M10.5 0L15 4.5L11.5 7.5L7 3.5Z" fill="#f0a8f4"/><path d="M7 3.5L11.5 7.5V11L7 7Z" fill="#d080dc"/><path d="M11.5 7.5L15 4.5V8L11.5 11Z" fill="#9050b8"/></svg><div class="t" style="left:1744.4px;top:661px;font-size:12px;color:#000;letter-spacing:-0.041px;">endPoint()</div><svg class="a" style="left:1679px;top:683px;" width="9" height="9" viewBox="0 0 9 9"><defs><linearGradient id="bxg" x1="0" y1="0" x2="0" y2="1"><stop offset="0" stop-color="#fff"/><stop offset="1" stop-color="#dcdcdc"/></linearGradient></defs><rect x="0.5" y="0.5" width="8" height="8" rx="1.5" fill="url(#bxg)" stroke="#999" stroke-width="1"/><path d="M2 4.5H7" stroke="#3f5cb0" stroke-width="1"/></svg><svg class="a" style="left:1701px;top:682px;" width="14" height="9" viewBox="0 0 14 9"><defs><linearGradient id="stg" x1="0" y1="0" x2="1" y2="1"><stop offset="0" stop-color="#d4e4f6"/><stop offset="0.5" stop-color="#a8c4e8"/><stop offset="0.55" stop-color="#86a8d4"/><stop offset="1" stop-color="#7a9ccc"/></linearGradient></defs><rect x="0.6" y="0.6" width="12.8" height="7.6" rx="3.2" fill="url(#stg)" stroke="#3a3a3a" stroke-width="1.2"/><circle cx="3" cy="3" r="0.9" fill="#fff"/></svg><div class="t" style="left:1721.4px;top:681px;font-size:12px;color:#000;letter-spacing:-0.003px;">Starting Point</div><svg class="a" style="left:1723px;top:702px;" width="16" height="12" viewBox="0 0 16 12"><path d="M2 3.5H6M0 5.5H6M1 7.5H6" stroke="#d0cc9a" stroke-width="0.9"/><path d="M3.5 3.5H6M3 5.5H6M3.5 7.5H6" stroke="#bdbdc8" stroke-width="0.9"/><path d="M10.5 0L15 4.5L11.5 7.5L7 3.5Z" fill="#f0a8f4"/><path d="M7 3.5L11.5 7.5V11L7 7Z" fill="#d080dc"/><path d="M11.5 7.5L15 4.5V8L11.5 11Z" fill="#9050b8"/></svg><div class="t" style="left:1744.4px;top:701px;font-size:12px;color:#000;letter-spacing:-0.212px;">callPlayersToStart()</div><svg class="a" style="left:1701px;top:722px;" width="14" height="9" viewBox="0 0 14 9"><defs><linearGradient id="stg" x1="0" y1="0" x2="1" y2="1"><stop offset="0" stop-color="#d4e4f6"/><stop offset="0.5" stop-color="#a8c4e8"/><stop offset="0.55" stop-color="#86a8d4"/><stop offset="1" stop-color="#7a9ccc"/></linearGradient></defs><rect x="0.6" y="0.6" width="12.8" height="7.6" rx="3.2" fill="url(#stg)" stroke="#3a3a3a" stroke-width="1.2"/><circle cx="3" cy="3" r="0.9" fill="#fff"/></svg><div class="t" style="left:1721.4px;top:721px;font-size:12px;color:#000;letter-spacing:0.169px;">Umpiring</div><svg class="a" style="left:1701px;top:741px;" width="12" height="12" viewBox="0 0 12 12"><circle cx="6" cy="6" r="5.3" fill="#222"/><circle cx="4.5" cy="4.5" r="2" fill="#555" opacity="0.7"/></svg><div class="t" style="left:1721.4px;top:741px;font-size:12px;color:#000;letter-spacing:0.098px;">Initial</div><svg class="a" style="left:1633px;top:763px;" width="9" height="9" viewBox="0 0 9 9"><defs><linearGradient id="bxg" x1="0" y1="0" x2="0" y2="1"><stop offset="0" stop-color="#fff"/><stop offset="1" stop-color="#dcdcdc"/></linearGradient></defs><rect x="0.5" y="0.5" width="8" height="8" rx="1.5" fill="url(#bxg)" stroke="#999" stroke-width="1"/><path d="M2 4.5H7" stroke="#3f5cb0" stroke-width="1"/></svg><svg class="a" style="left:1656px;top:760px;" width="12" height="14" viewBox="0 0 12 14"><path d="M0.5 0.5H8.5L11.5 3.5V13.5H0.5Z" fill="#fff" stroke="#a4a4de" stroke-width="1"/><path d="M1 13L11 5V13Z" fill="#bcd2f2"/><path d="M11.5 3.5V13.5H0.5" fill="none" stroke="#5a7ad0" stroke-width="1.1"/><path d="M8.5 0.5V3.5H11.5" fill="#fff" stroke="#a4a4de" stroke-width="0.8"/><path d="M2 2.5H7M2 4.5H7M2 6.5H10M2 8.5H10" stroke="#9a9ad4" stroke-width="0.9"/></svg><div class="t" style="left:1675.4px;top:761px;font-size:12px;color:#000;letter-spacing:-0.086px;">«executable statemachine» TennisMatch</div><svg class="a" style="left:1678px;top:783px;" width="14" height="9" viewBox="0 0 14 9"><rect x="0.6" y="0.6" width="12.8" height="7.8" fill="#fff" stroke="#6a6ad0" stroke-width="1.1"/><path d="M3 8L13 1.5V8Z" fill="#c4d6f4"/><path d="M0.4 8.5H13.5V0.6" fill="none" stroke="#333" stroke-width="1.1"/><rect x="2" y="3" width="1.6" height="3" fill="#9a9ae0"/><rect x="4.8" y="3" width="0.9" height="3" fill="#222"/><rect x="7" y="3" width="5" height="3" fill="#4a4ad0"/></svg><div class="t" style="left:1698.4px;top:781px;font-size:12px;color:#000;letter-spacing:-0.038px;">ChairUmpire: Umpire</div><svg class="a" style="left:1678px;top:803px;" width="14" height="9" viewBox="0 0 14 9"><rect x="0.6" y="0.6" width="12.8" height="7.8" fill="#fff" stroke="#6a6ad0" stroke-width="1.1"/><path d="M3 8L13 1.5V8Z" fill="#c4d6f4"/><path d="M0.4 8.5H13.5V0.6" fill="none" stroke="#333" stroke-width="1.1"/><rect x="2" y="3" width="1.6" height="3" fill="#9a9ae0"/><rect x="4.8" y="3" width="0.9" height="3" fill="#222"/><rect x="7" y="3" width="5" height="3" fill="#4a4ad0"/></svg><div class="t" style="left:1698.4px;top:801px;font-size:12px;color:#000;letter-spacing:-0.384px;">Player1: Player</div><svg class="a" style="left:1678px;top:823px;" width="14" height="9" viewBox="0 0 14 9"><rect x="0.6" y="0.6" width="12.8" height="7.8" fill="#fff" stroke="#6a6ad0" stroke-width="1.1"/><path d="M3 8L13 1.5V8Z" fill="#c4d6f4"/><path d="M0.4 8.5H13.5V0.6" fill="none" stroke="#333" stroke-width="1.1"/><rect x="2" y="3" width="1.6" height="3" fill="#9a9ae0"/><rect x="4.8" y="3" width="0.9" height="3" fill="#222"/><rect x="7" y="3" width="5" height="3" fill="#4a4ad0"/></svg><div class="t" style="left:1698.4px;top:821px;font-size:12px;color:#000;letter-spacing:-0.384px;">Player2: Player</div><div class="a" style="left:1577px;top:837px;width:325px;height:20px;background:#fdeab0;"></div><svg class="a" style="left:1610px;top:843px;" width="9" height="9" viewBox="0 0 9 9"><defs><linearGradient id="bxg" x1="0" y1="0" x2="0" y2="1"><stop offset="0" stop-color="#fff"/><stop offset="1" stop-color="#dcdcdc"/></linearGradient></defs><rect x="0.5" y="0.5" width="8" height="8" rx="1.5" fill="url(#bxg)" stroke="#999" stroke-width="1"/><path d="M2 4.5H7" stroke="#3f5cb0" stroke-width="1"/></svg><svg class="a" style="left:1631px;top:840px;" width="15" height="14" viewBox="0 0 15 14"><rect x="0.7" y="0.7" width="13.6" height="12.6" rx="0.8" fill="#f8dcc0" stroke="url(#pkb)" stroke-width="1.4"/><rect x="4" y="3.2" width="7" height="7.6" fill="#eef0fb" stroke="#6a72b8" stroke-width="1"/><path d="M5.5 5.5H9.5M5.5 7.2H9.5M5.5 8.9H9.5" stroke="#6a72b8" stroke-width="0.8"/></svg><div class="t" style="left:1652.4px;top:841px;font-size:12px;color:#000;letter-spacing:-0.167px;">Simulation TestCases</div><svg class="a" style="left:1633px;top:863px;" width="9" height="9" viewBox="0 0 9 9"><defs><linearGradient id="bxg" x1="0" y1="0" x2="0" y2="1"><stop offset="0" stop-color="#fff"/><stop offset="1" stop-color="#dcdcdc"/></linearGradient></defs><rect x="0.5" y="0.5" width="8" height="8" rx="1.5" fill="url(#bxg)" stroke="#999" stroke-width="1"/><path d="M2 4.5H7" stroke="#3f5cb0" stroke-width="1"/></svg><svg class="a" style="left:1654px;top:859px;" width="15" height="14" viewBox="0 0 15 14"><path d="M1.6 2.4L2.6 0.6H6.6L7.6 2.4" fill="#fff4d8" stroke="#d8a820" stroke-width="1.1"/><rect x="0.6" y="2.6" width="13.8" height="10.8" fill="#f4d0b0" stroke="#d8a820" stroke-width="1.2"/><path d="M0.4 13.4H14.4V2.6" fill="none" stroke="#b85020" stroke-width="1.2"/><path d="M1.7 12V3.7H13" fill="none" stroke="#fff6dc" stroke-width="0.9"/></svg><div class="t" style="left:1675.4px;top:861px;font-size:12px;color:#000;letter-spacing:-0.578px;">TestCases</div><svg class="a" style="left:1656px;top:883px;" width="9" height="9" viewBox="0 0 9 9"><defs><linearGradient id="bxg" x1="0" y1="0" x2="0" y2="1"><stop offset="0" stop-color="#fff"/><stop offset="1" stop-color="#dcdcdc"/></linearGradient></defs><rect x="0.5" y="0.5" width="8" height="8" rx="1.5" fill="url(#bxg)" stroke="#999" stroke-width="1"/><path d="M2 4.5H7" stroke="#3f5cb0" stroke-width="1"/><path d="M4.5 2V7" stroke="#3f5cb0" stroke-width="1"/></svg><svg class="a" style="left:1677px;top:879px;" width="15" height="14" viewBox="0 0 15 14"><path d="M1.6 2.4L2.6 0.6H6.6L7.6 2.4" fill="#fff4d8" stroke="#d8a820" stroke-width="1.1"/><rect x="0.6" y="2.6" width="13.8" height="10.8" fill="#f4d0b0" stroke="#d8a820" stroke-width="1.2"/><path d="M0.4 13.4H14.4V2.6" fill="none" stroke="#b85020" stroke-width="1.2"/><path d="M1.7 12V3.7H13" fill="none" stroke="#fff6dc" stroke-width="0.9"/></svg><div class="t" style="left:1698.4px;top:881px;font-size:12px;color:#000;letter-spacing:-0.290px;">DeferredEvent</div><svg class="a" style="left:1656px;top:903px;" width="9" height="9" viewBox="0 0 9 9"><defs><linearGradient id="bxg" x1="0" y1="0" x2="0" y2="1"><stop offset="0" stop-color="#fff"/><stop offset="1" stop-color="#dcdcdc"/></linearGradient></defs><rect x="0.5" y="0.5" width="8" height="8" rx="1.5" fill="url(#bxg)" stroke="#999" stroke-width="1"/><path d="M2 4.5H7" stroke="#3f5cb0" stroke-width="1"/><path d="M4.5 2V7" stroke="#3f5cb0" stroke-width="1"/></svg><svg class="a" style="left:1677px;top:899px;" width="15" height="14" viewBox="0 0 15 14"><path d="M1.6 2.4L2.6 0.6H6.6L7.6 2.4" fill="#fff4d8" stroke="#d8a820" stroke-width="1.1"/><rect x="0.6" y="2.6" width="13.8" height="10.8" fill="#f4d0b0" stroke="#d8a820" stroke-width="1.2"/><path d="M0.4 13.4H14.4V2.6" fill="none" stroke="#b85020" stroke-width="1.2"/><path d="M1.7 12V3.7H13" fill="none" stroke="#fff6dc" stroke-width="0.9"/></svg><div class="t" style="left:1698.4px;top:901px;font-size:12px;color:#000;letter-spacing:-0.260px;">ForkNJoin</div><svg class="a" style="left:1656px;top:923px;" width="9" height="9" viewBox="0 0 9 9"><defs><linearGradient id="bxg" x1="0" y1="0" x2="0" y2="1"><stop offset="0" stop-color="#fff"/><stop offset="1" stop-color="#dcdcdc"/></linearGradient></defs><rect x="0.5" y="0.5" width="8" height="8" rx="1.5" fill="url(#bxg)" stroke="#999" stroke-width="1"/><path d="M2 4.5H7" stroke="#3f5cb0" stroke-width="1"/><path d="M4.5 2V7" stroke="#3f5cb0" stroke-width="1"/></svg><svg class="a" style="left:1677px;top:919px;" width="15" height="14" viewBox="0 0 15 14"><path d="M1.6 2.4L2.6 0.6H6.6L7.6 2.4" fill="#fff4d8" stroke="#d8a820" stroke-width="1.1"/><rect x="0.6" y="2.6" width="13.8" height="10.8" fill="#f4d0b0" stroke="#d8a820" stroke-width="1.2"/><path d="M0.4 13.4H14.4V2.6" fill="none" stroke="#b85020" stroke-width="1.2"/><path d="M1.7 12V3.7H13" fill="none" stroke="#fff6dc" stroke-width="0.9"/></svg><div class="t" style="left:1698.4px;top:921px;font-size:12px;color:#000;letter-spacing:0.035px;">HistoryDemo</div><svg class="a" style="left:1656px;top:943px;" width="9" height="9" viewBox="0 0 9 9"><defs><linearGradient id="bxg" x1="0" y1="0" x2="0" y2="1"><stop offset="0" stop-color="#fff"/><stop offset="1" stop-color="#dcdcdc"/></linearGradient></defs><rect x="0.5" y="0.5" width="8" height="8" rx="1.5" fill="url(#bxg)" stroke="#999" stroke-width="1"/><path d="M2 4.5H7" stroke="#3f5cb0" stroke-width="1"/><path d="M4.5 2V7" stroke="#3f5cb0" stroke-width="1"/></svg><svg class="a" style="left:1677px;top:939px;" width="15" height="14" viewBox="0 0 15 14"><path d="M1.6 2.4L2.6 0.6H6.6L7.6 2.4" fill="#fff4d8" stroke="#d8a820" stroke-width="1.1"/><rect x="0.6" y="2.6" width="13.8" height="10.8" fill="#f4d0b0" stroke="#d8a820" stroke-width="1.2"/><path d="M0.4 13.4H14.4V2.6" fill="none" stroke="#b85020" stroke-width="1.2"/><path d="M1.7 12V3.7H13" fill="none" stroke="#fff6dc" stroke-width="0.9"/></svg><div class="t" style="left:1698.4px;top:941px;font-size:12px;color:#000;letter-spacing:0.169px;">Orthogonal</div><svg class="a" style="left:1656px;top:963px;" width="9" height="9" viewBox="0 0 9 9"><defs><linearGradient id="bxg" x1="0" y1="0" x2="0" y2="1"><stop offset="0" stop-color="#fff"/><stop offset="1" stop-color="#dcdcdc"/></linearGradient></defs><rect x="0.5" y="0.5" width="8" height="8" rx="1.5" fill="url(#bxg)" stroke="#999" stroke-width="1"/><path d="M2 4.5H7" stroke="#3f5cb0" stroke-width="1"/><path d="M4.5 2V7" stroke="#3f5cb0" stroke-width="1"/></svg><svg class="a" style="left:1677px;top:959px;" width="15" height="14" viewBox="0 0 15 14"><path d="M1.6 2.4L2.6 0.6H6.6L7.6 2.4" fill="#fff4d8" stroke="#d8a820" stroke-width="1.1"/><rect x="0.6" y="2.6" width="13.8" height="10.8" fill="#f4d0b0" stroke="#d8a820" stroke-width="1.2"/><path d="M0.4 13.4H14.4V2.6" fill="none" stroke="#b85020" stroke-width="1.2"/><path d="M1.7 12V3.7H13" fill="none" stroke="#fff6dc" stroke-width="0.9"/></svg><div class="t" style="left:1698.4px;top:961px;font-size:12px;color:#000;letter-spacing:-0.315px;">SignalEvent</div><svg class="a" style="left:1656px;top:983px;" width="9" height="9" viewBox="0 0 9 9"><defs><linearGradient id="bxg" x1="0" y1="0" x2="0" y2="1"><stop offset="0" stop-color="#fff"/><stop offset="1" stop-color="#dcdcdc"/></linearGradient></defs><rect x="0.5" y="0.5" width="8" height="8" rx="1.5" fill="url(#bxg)" stroke="#999" stroke-width="1"/><path d="M2 4.5H7" stroke="#3f5cb0" stroke-width="1"/><path d="M4.5 2V7" stroke="#3f5cb0" stroke-width="1"/></svg><svg class="a" style="left:1677px;top:979px;" width="15" height="14" viewBox="0 0 15 14"><path d="M1.6 2.4L2.6 0.6H6.6L7.6 2.4" fill="#fff4d8" stroke="#d8a820" stroke-width="1.1"/><rect x="0.6" y="2.6" width="13.8" height="10.8" fill="#f4d0b0" stroke="#d8a820" stroke-width="1.2"/><path d="M0.4 13.4H14.4V2.6" fill="none" stroke="#b85020" stroke-width="1.2"/><path d="M1.7 12V3.7H13" fill="none" stroke="#fff6dc" stroke-width="0.9"/></svg><div class="t" style="left:1698.4px;top:981px;font-size:12px;color:#000;letter-spacing:-0.116px;">Simple</div><svg class="a" style="left:1656px;top:1003px;" width="9" height="9" viewBox="0 0 9 9"><defs><linearGradient id="bxg" x1="0" y1="0" x2="0" y2="1"><stop offset="0" stop-color="#fff"/><stop offset="1" stop-color="#dcdcdc"/></linearGradient></defs><rect x="0.5" y="0.5" width="8" height="8" rx="1.5" fill="url(#bxg)" stroke="#999" stroke-width="1"/><path d="M2 4.5H7" stroke="#3f5cb0" stroke-width="1"/><path d="M4.5 2V7" stroke="#3f5cb0" stroke-width="1"/></svg><svg class="a" style="left:1677px;top:999px;" width="15" height="14" viewBox="0 0 15 14"><path d="M1.6 2.4L2.6 0.6H6.6L7.6 2.4" fill="#fff4d8" stroke="#d8a820" stroke-width="1.1"/><rect x="0.6" y="2.6" width="13.8" height="10.8" fill="#f4d0b0" stroke="#d8a820" stroke-width="1.2"/><path d="M0.4 13.4H14.4V2.6" fill="none" stroke="#b85020" stroke-width="1.2"/><path d="M1.7 12V3.7H13" fill="none" stroke="#fff6dc" stroke-width="0.9"/></svg><div class="t" style="left:1698.4px;top:1001px;font-size:12px;color:#000;letter-spacing:-0.181px;">SubMachineState</div><svg class="a" style="left:1610px;top:1023px;" width="9" height="9" viewBox="0 0 9 9"><defs><linearGradient id="bxg" x1="0" y1="0" x2="0" y2="1"><stop offset="0" stop-color="#fff"/><stop offset="1" stop-color="#dcdcdc"/></linearGradient></defs><rect x="0.5" y="0.5" width="8" height="8" rx="1.5" fill="url(#bxg)" stroke="#999" stroke-width="1"/><path d="M2 4.5H7" stroke="#3f5cb0" stroke-width="1"/></svg><svg class="a" style="left:1631px;top:1020px;" width="15" height="14" viewBox="0 0 15 14"><rect x="0.7" y="0.7" width="13.6" height="12.6" rx="0.8" fill="#f8dcc0" stroke="url(#pkb)" stroke-width="1.4"/><rect x="4" y="3.2" width="7" height="7.6" fill="#eef0fb" stroke="#6a72b8" stroke-width="1"/><path d="M5.5 5.5H9.5M5.5 7.2H9.5M5.5 8.9H9.5" stroke="#6a72b8" stroke-width="0.8"/></svg><div class="t" style="left:1652.4px;top:1021px;font-size:12px;color:#000;letter-spacing:0.063px;">JavaScript Fidelity Tests</div></div><div class="a" style="left:1902px;top:97px;width:17px;height:928px;background:#f0f0f0;"></div><div class="a" style="left:1902px;top:129px;width:17px;height:697px;background:#cdcdcd;"></div><svg class="a" style="left:1906px;top:102px;" width="9" height="6" viewBox="0 0 9 6"><path d="M0.8 5.2L4.5 1.5L8.2 5.2" fill="none" stroke="#505050" stroke-width="1.8"/></svg><svg class="a" style="left:1906px;top:1014px;" width="9" height="6" viewBox="0 0 9 6"><path d="M0.8 0.8L4.5 4.5L8.2 0.8" fill="none" stroke="#505050" stroke-width="1.8"/></svg><div class="a" style="left:1577px;top:1025px;width:342px;height:1px;background:#a8a8a8;"></div>
<div class="a" style="left:0px;top:685px;width:763px;height:22px;background:linear-gradient(#4d5f86,#40537b);"></div><div class="t" style="left:4.5px;top:691px;font-size:11.5px;color:#fff;letter-spacing:0.089px;">Simulation</div><svg class="a" style="left:715px;top:696px;" width="9" height="5" viewBox="0 0 9 5"><path d="M0 0H9L4.5 5Z" fill="#dfe3ec"/></svg><svg class="a" style="left:733px;top:692px;" width="8" height="10" viewBox="0 0 8 10"><path d="M2 0.6H6V5H2Z M0.5 5.5H7.5 M4 5.5V10" fill="none" stroke="#dfe3ec" stroke-width="1.1"/><path d="M5.4 0.6V5" stroke="#dfe3ec" stroke-width="1.2"/></svg><svg class="a" style="left:749px;top:693px;" width="9" height="8" viewBox="0 0 9 8"><path d="M0.7 0.5L8.3 7.5M8.3 0.5L0.7 7.5" stroke="#dfe3ec" stroke-width="1.6"/></svg><div class="a" style="left:0px;top:707px;width:763px;height:27px;background:#bbc6da;"></div><div class="a" style="left:4px;top:710px;width:116px;height:19px;background:#fff;border:1px solid #8e98ad"></div><div class="t" style="left:7px;top:715px;font-size:11.5px;color:#000;letter-spacing:-0.006px;">TennisMatch</div><svg class="a" style="left:110px;top:718px;" width="5" height="3" viewBox="0 0 5 3"><path d="M0 0H5 L2.5 3Z" fill="#111"/></svg><svg class="a" style="left:126px;top:715px;" width="13" height="14" viewBox="0 0 13 14"><circle cx="8" cy="5" r="3.5" fill="#d3e0f2" stroke="#8aaad0" stroke-width="1.4"/><path d="M5.4 7.8L1 12.6" stroke="#8a9cc8" stroke-width="1.9"/></svg><div class="a" style="left:148px;top:713px;width:1px;height:19px;background:#6f7a92;"></div><svg class="a" style="left:160px;top:717px;" width="8" height="12" viewBox="0 0 8 12"><path d="M1.2 0.8L7 5.8L1.2 10.8Z" fill="#c3d0f6" stroke="#2f49d8" stroke-width="1.1"/></svg><svg class="a" style="left:180px;top:718px;" width="11" height="9" viewBox="0 0 11 9"><rect x="0.6" y="0.6" width="3" height="7.4" fill="#c3d0f6" stroke="#2f49d8" stroke-width="1.1"/><rect x="6.6" y="0.6" width="3" height="7.4" fill="#c3d0f6" stroke="#2f49d8" stroke-width="1.1"/></svg><svg class="a" style="left:201px;top:714px;" width="15" height="15" viewBox="0 0 15 15"><path d="M6 0.8H0.8V12H3.5" fill="none" stroke="#222" stroke-width="1.2"/><path d="M3 9.5V14.5L6 12Z" fill="#222"/><path d="M7.5 2.5H14.5M8.5 4.5H14.5M8.5 6.5H14.5M8.5 8.5H14.5M7.5 10.5H14.5" stroke="#222" stroke-width="1"/></svg><svg class="a" style="left:223px;top:715px;" width="15" height="13" viewBox="0 0 15 13"><path d="M0.8 4V1.5H6.5" fill="none" stroke="#8a93a8" stroke-width="1.2"/><path d="M3.5 1.5V5" stroke="#8a93a8" stroke-width="1.2"/><path d="M1.5 4.5H5.5L3.5 7.5Z" fill="#8a93a8"/><path d="M7 3.5H14M9 5.5H14M9 7.5H14M9 9.5H14M7 11.5H14" stroke="#8a93a8" stroke-width="1"/></svg><svg class="a" style="left:245px;top:714px;" width="15" height="15" viewBox="0 0 15 15"><path d="M0.8 8.5V4H5" fill="none" stroke="#8a93a8" stroke-width="1.2"/><path d="M4 1.5L7 4L4 6.5Z" fill="#8a93a8"/><path d="M0.8 8.5H6" stroke="#8a93a8" stroke-width="1.2"/><path d="M7 6.5H14M9 8.5H14M9 10.5H14M9 12.5H14M7 14.5H14" stroke="#8a93a8" stroke-width="1"/></svg><svg class="a" style="left:269px;top:718px;" width="9" height="9" viewBox="0 0 9 9"><rect x="0.7" y="0.7" width="7.4" height="7.4" fill="#cfdcf4" stroke="#2f49d8" stroke-width="1.3"/></svg><div class="a" style="left:288px;top:713px;width:1px;height:19px;background:#6f7a92;"></div><div class="a" style="left:294px;top:710px;width:86px;height:19px;background:#fff;border:1px solid #8e98ad"></div><div class="t" style="left:298px;top:715px;font-size:11.5px;color:#000;letter-spacing:-0.433px;">Executable</div><svg class="a" style="left:370px;top:718px;" width="5" height="3" viewBox="0 0 5 3"><path d="M0 0H5 L2.5 3Z" fill="#111"/></svg><div class="t" style="left:389px;top:716px;font-size:11.5px;color:#000;letter-spacing:-0.212px;">Tools</div><svg class="a" style="left:427px;top:719px;" width="5" height="3" viewBox="0 0 5 3"><path d="M0 0H5 L2.5 3Z" fill="#111"/></svg><div class="a" style="left:438px;top:713px;width:1px;height:19px;background:#6f7a92;"></div><div class="a" style="left:444px;top:711px;width:46px;height:18px;background:#fff;border:1px solid #9aa4ba"></div><div class="t" style="left:448.5px;top:716px;font-size:11.5px;color:#000;letter-spacing:-0.792px;">50</div><div class="a" style="left:472px;top:712px;width:17px;height:8px;background:#dde3ef;border:1px solid #fff"></div><div class="a" style="left:472px;top:720px;width:17px;height:8px;background:#dde3ef;border:1px solid #fff"></div><svg class="a" style="left:478px;top:715px;" width="5" height="3" viewBox="0 0 5 3"><path d="M0 3H5L2.5 0Z" fill="#111"/></svg><svg class="a" style="left:478px;top:723px;" width="5" height="3" viewBox="0 0 5 3"><path d="M0 0H5L2.5 3Z" fill="#111"/></svg><div class="a" style="left:0px;top:734px;width:763px;height:292px;background:#fff;"></div><div class="a" style="left:0px;top:734px;width:16px;height:18px;background:#f0f0f0;"></div><div class="a" style="left:0px;top:752px;width:763px;height:1px;background:#c5d0e6;"></div><div class="t" style="left:6.5px;top:757px;font-size:12px;color:#000;letter-spacing:-0.628px;">[1818662165]</div><div class="t" style="left:92.5px;top:757px;font-size:12px;color:#000;letter-spacing:-0.217px;">Player1[Player].Player_Playing_Hitting DO</div><div class="t" style="left:6.5px;top:776px;font-size:12px;color:#000;letter-spacing:-0.628px;">[1818663484]</div><div class="t" style="left:92.5px;top:776px;font-size:12px;color:#000;letter-spacing:-0.249px;">Blocked</div><div class="t" style="left:6.5px;top:795px;font-size:12px;color:#000;letter-spacing:-0.628px;">[1818663813]</div><div class="t" style="left:92.5px;top:795px;font-size:12px;color:#000;letter-spacing:-0.357px;">Player2[Player].Player_Playing_Receiving EXIT</div><div class="t" style="left:6.5px;top:814px;font-size:12px;color:#000;letter-spacing:-0.628px;">[1818663815]</div><div class="t" style="left:92.5px;top:814px;font-size:12px;color:#000;letter-spacing:-0.369px;">Player2[Player].Player_Playing EXIT</div><div class="t" style="left:6.5px;top:833px;font-size:12px;color:#000;letter-spacing:-0.628px;">[1818663817]</div><div class="t" style="left:92.5px;top:833px;font-size:12px;color:#000;letter-spacing:-0.333px;">Player2[Player].Playing__TO__Waiting_1207 Effect</div><div class="t" style="left:6.5px;top:852px;font-size:12px;color:#000;letter-spacing:-0.628px;">[1818663819]</div><div class="t" style="left:92.5px;top:852px;font-size:12px;color:#000;letter-spacing:-0.316px;">Player2[Player].Player_Waiting ENTRY</div><div class="t" style="left:6.5px;top:871px;font-size:12px;color:#000;letter-spacing:-0.628px;">[1818663821]</div><div class="t" style="left:92.5px;top:871px;font-size:12px;color:#000;letter-spacing:-0.250px;">Player2[Player].Player_Waiting DO</div><div class="t" style="left:6.5px;top:890px;font-size:12px;color:#000;letter-spacing:-0.628px;">[1818663823]</div><div class="t" style="left:92.5px;top:890px;font-size:12px;color:#000;letter-spacing:-0.270px;">Player1[Player].Player_Playing_Hitting EXIT</div><div class="t" style="left:6.5px;top:909px;font-size:12px;color:#000;letter-spacing:-0.628px;">[1818663825]</div><div class="t" style="left:92.5px;top:909px;font-size:12px;color:#000;letter-spacing:-0.369px;">Player1[Player].Player_Playing EXIT</div><div class="t" style="left:6.5px;top:928px;font-size:12px;color:#000;letter-spacing:-0.628px;">[1818663826]</div><div class="t" style="left:92.5px;top:928px;font-size:12px;color:#000;letter-spacing:-0.333px;">Player1[Player].Playing__TO__Waiting_1207 Effect</div><div class="t" style="left:6.5px;top:947px;font-size:12px;color:#000;letter-spacing:-0.628px;">[1818663828]</div><div class="t" style="left:92.5px;top:947px;font-size:12px;color:#000;letter-spacing:-0.316px;">Player1[Player].Player_Waiting ENTRY</div><div class="t" style="left:6.5px;top:966px;font-size:12px;color:#000;letter-spacing:-0.628px;">[1818663830]</div><div class="t" style="left:92.5px;top:966px;font-size:12px;color:#000;letter-spacing:-0.250px;">Player1[Player].Player_Waiting DO</div><div class="t" style="left:6.5px;top:985px;font-size:12px;color:#000;letter-spacing:-0.628px;">[1818665181]</div><div class="t" style="left:92.5px;top:985px;font-size:12px;color:#000;letter-spacing:-0.249px;">Blocked</div><div class="a" style="left:747px;top:753px;width:16px;height:257px;background:#f0f0f0;"></div><div class="a" style="left:747px;top:975px;width:16px;height:17px;background:#cdcdcd;"></div><svg class="a" style="left:750.5px;top:758px;" width="9" height="6" viewBox="0 0 9 6"><path d="M0.8 5.2L4.5 1.5L8.2 5.2" fill="none" stroke="#505050" stroke-width="1.8"/></svg><svg class="a" style="left:750.5px;top:999px;" width="9" height="6" viewBox="0 0 9 6"><path d="M0.8 0.8L4.5 4.5L8.2 0.8" fill="none" stroke="#505050" stroke-width="1.8"/></svg><div class="a" style="left:0px;top:1010px;width:747px;height:16px;background:#f0f0f0;"></div><div class="a" style="left:17px;top:1010px;width:531px;height:16px;background:#cdcdcd;"></div><svg class="a" style="left:5px;top:1013.5px;" width="6" height="9" viewBox="0 0 6 9"><path d="M5.2 0.8L1.5 4.5L5.2 8.2" fill="none" stroke="#505050" stroke-width="1.8"/></svg><svg class="a" style="left:735px;top:1013.5px;" width="6" height="9" viewBox="0 0 6 9"><path d="M0.8 0.8L4.5 4.5L0.8 8.2" fill="none" stroke="#505050" stroke-width="1.8"/></svg><div class="a" style="left:747px;top:1010px;width:16px;height:16px;background:#f0f0f0;"></div>
<div class="a" style="left:767px;top:685px;width:806px;height:22px;background:linear-gradient(#4d5f86,#40537b);"></div><div class="t" style="left:771.5px;top:691px;font-size:11.5px;color:#fff;letter-spacing:-0.128px;">Simulation Events</div><svg class="a" style="left:1525px;top:696px;" width="9" height="5" viewBox="0 0 9 5"><path d="M0 0H9L4.5 5Z" fill="#dfe3ec"/></svg><svg class="a" style="left:1543px;top:692px;" width="8" height="10" viewBox="0 0 8 10"><path d="M2 0.6H6V5H2Z M0.5 5.5H7.5 M4 5.5V10" fill="none" stroke="#dfe3ec" stroke-width="1.1"/><path d="M5.4 0.6V5" stroke="#dfe3ec" stroke-width="1.2"/></svg><svg class="a" style="left:1559px;top:693px;" width="9" height="8" viewBox="0 0 9 8"><path d="M0.7 0.5L8.3 7.5M8.3 0.5L0.7 7.5" stroke="#dfe3ec" stroke-width="1.6"/></svg><div class="a" style="left:767px;top:707px;width:806px;height:27px;background:#bbc6da;"></div><div class="a" style="left:771px;top:710px;width:146px;height:19px;background:#d7dcea;border:1px solid #9ba6be"></div><div class="t" style="left:775px;top:715px;font-size:11.5px;color:#7b808c;letter-spacing:-0.007px;">&lt;no event set&gt;</div><svg class="a" style="left:907px;top:718px;" width="5" height="3" viewBox="0 0 5 3"><path d="M0 0H5 L2.5 3Z" fill="#777"/></svg><svg class="a" style="left:926px;top:715px;" width="13" height="13" viewBox="0 0 13 13"><rect x="0.6" y="0.6" width="12.8" height="11.8" fill="#fff" stroke="#5a5ad0" stroke-width="1.2"/><path d="M1 2.5H13" stroke="#5a5ad0" stroke-width="2" stroke-dasharray="1.5 1"/><path d="M2.5 5.5H11.5M2.5 7.5H11.5M2.5 9.5H11.5" stroke="#8a8ad8" stroke-width="0.9"/></svg><svg class="a" style="left:947px;top:720px;" width="5" height="3" viewBox="0 0 5 3"><path d="M0 0H5 L2.5 3Z" fill="#111"/></svg><svg class="a" style="left:961px;top:716px;" width="8" height="11" viewBox="0 0 8 11"><path d="M4 10.5L0.5 6H2.8V0.5H5.2V6H7.5Z" fill="#6a9ade"/></svg><svg class="a" style="left:983px;top:716px;" width="8" height="11" viewBox="0 0 8 11"><path d="M4 0.5L0.5 5H2.8V10.5H5.2V5H7.5Z" fill="#6a9ade"/></svg><svg class="a" style="left:1004px;top:716px;" width="8" height="11" viewBox="0 0 8 11"><path d="M6 0.5L1.5 5.5H4L2 10.5L6.5 4.5H4Z" fill="#e27a5c"/></svg><div class="a" style="left:1020px;top:709px;width:22px;height:24px;background:#fdedb8;border:1px solid #e8c060"></div><svg class="a" style="left:1024px;top:716px;" width="14" height="12" viewBox="0 0 14 12"><path d="M5.5 0.5L1.5 6H4L2 11.5L6.5 5H4Z" fill="#e0200a"/><path d="M11.5 0.5L7.5 6H10L8 11.5L12.5 5H10Z" fill="#e0200a"/></svg><svg class="a" style="left:1049px;top:717px;" width="9" height="9" viewBox="0 0 9 9"><path d="M1 1L8 8M8 1L1 8" stroke="#e07868" stroke-width="1.4"/></svg><svg class="a" style="left:1067.5px;top:712px;" width="16" height="16" viewBox="0 0 16 16"><circle cx="8" cy="8" r="7.2" fill="#7f84d8" stroke="#4a52c0" stroke-width="1.1"/><circle cx="8" cy="8" r="5.6" fill="#7474c8" stroke="#c4c8f4" stroke-width="0.9"/><text x="8" y="11.4" font-size="9.5" font-weight="bold" fill="#fff" text-anchor="middle" font-family="Liberation Sans">?</text></svg><svg class="a" style="left:1554px;top:715px;" width="12" height="11" viewBox="0 0 12 11"><path d="M0.7 3.5H6V0.8L11.3 5.5L6 10.2V7.5H0.7Z" fill="#b8b8b8" stroke="#666" stroke-width="0.8"/></svg><div class="a" style="left:767px;top:734px;width:516px;height:292px;background:#fff;"></div><div class="a" style="left:767px;top:757px;width:516px;height:1px;background:#e3e8f3;"></div><div class="t" style="left:772.2px;top:740px;font-size:12px;color:#000;letter-spacing:-0.464px;">Sequence</div><div class="t" style="left:847.2px;top:740px;font-size:12px;color:#000;letter-spacing:0.039px;">Trigger</div><div class="t" style="left:927px;top:740px;font-size:12px;color:#000;letter-spacing:-0.404px;">Status</div><div class="t" style="left:1007px;top:740px;font-size:12px;color:#000;letter-spacing:-0.006px;">Type</div><div class="t" style="left:1087px;top:740px;font-size:12px;color:#000;letter-spacing:-0.280px;">Parameters</div><div class="a" style="left:1267px;top:738px;width:16px;height:16px;overflow:hidden"><div class="t" style="left:0.3px;top:2px;font-size:12px;color:#000;letter-spacing:-0.839px;">Eve</div></div><div class="a" style="left:841px;top:735px;width:1px;height:22px;background:#e3e8f3;"></div><div class="a" style="left:921.5px;top:735px;width:1px;height:22px;background:#e3e8f3;"></div><div class="a" style="left:1001.5px;top:735px;width:1px;height:22px;background:#e3e8f3;"></div><div class="a" style="left:1081.5px;top:735px;width:1px;height:22px;background:#e3e8f3;"></div><div class="a" style="left:1261.5px;top:735px;width:1px;height:22px;background:#e3e8f3;"></div><svg class="a" style="left:798px;top:762px;" width="16" height="9" viewBox="0 0 16 9"><path d="M0.7 0.7H11.5L15.3 4.5L11.5 8.3H0.7Z" fill="#7cc8ec" stroke="#6a66c4" stroke-width="1.2"/><path d="M1.4 1.4H6.2L1.4 6.2Z" fill="#dff1fa"/><path d="M6.3 7.6L11 2.3L14.3 4.5L11.2 7.6Z" fill="#5aa0c8"/></svg><div class="a" style="left:833px;top:759.8px;width:3px;height:14px;overflow:hidden"><div class="t" style="left:0px;top:1px;font-size:12px;color:#a8a8a8;">1</div></div><div class="t" style="left:852.3px;top:761px;font-size:12px;color:#a8a8a8;letter-spacing:-0.336px;">BallMissed</div><div class="t" style="left:932.2px;top:761px;font-size:12px;color:#a8a8a8;letter-spacing:-0.096px;">signalled</div><div class="t" style="left:1012px;top:761px;font-size:12px;color:#a8a8a8;letter-spacing:-0.312px;">Signal</div><svg class="a" style="left:798px;top:780px;" width="16" height="9" viewBox="0 0 16 9"><path d="M0.7 0.7H11.5L15.3 4.5L11.5 8.3H0.7Z" fill="#7cc8ec" stroke="#6a66c4" stroke-width="1.2"/><path d="M1.4 1.4H6.2L1.4 6.2Z" fill="#dff1fa"/><path d="M6.3 7.6L11 2.3L14.3 4.5L11.2 7.6Z" fill="#5aa0c8"/></svg><div class="a" style="left:833px;top:777.8px;width:3px;height:14px;overflow:hidden"><div class="t" style="left:0px;top:1px;font-size:12px;color:#a8a8a8;">2</div></div><div class="t" style="left:852.3px;top:779px;font-size:12px;color:#a8a8a8;letter-spacing:-0.225px;">BallOut</div><div class="t" style="left:932.2px;top:779px;font-size:12px;color:#a8a8a8;letter-spacing:-0.096px;">signalled</div><div class="t" style="left:1012px;top:779px;font-size:12px;color:#a8a8a8;letter-spacing:-0.312px;">Signal</div><div class="a" style="left:1272px;top:776.8px;width:11px;height:16px;overflow:hidden"><div class="t" style="left:0px;top:2px;font-size:12px;color:#a8a8a8;">Ba</div></div><svg class="a" style="left:798px;top:798px;" width="16" height="9" viewBox="0 0 16 9"><path d="M0.7 0.7H11.5L15.3 4.5L11.5 8.3H0.7Z" fill="#7cc8ec" stroke="#6a66c4" stroke-width="1.2"/><path d="M1.4 1.4H6.2L1.4 6.2Z" fill="#dff1fa"/><path d="M6.3 7.6L11 2.3L14.3 4.5L11.2 7.6Z" fill="#5aa0c8"/></svg><div class="a" style="left:833px;top:795.8px;width:3px;height:14px;overflow:hidden"><div class="t" style="left:0px;top:1px;font-size:12px;color:#a8a8a8;">3</div></div><div class="a" style="left:852px;top:794.8px;width:67px;height:16px;overflow:hidden"><div class="t" style="left:0.3px;top:2px;font-size:12px;color:#a8a8a8;letter-spacing:-0.225px;">CallToReceive</div></div><div class="t" style="left:932.2px;top:797px;font-size:12px;color:#a8a8a8;letter-spacing:-0.096px;">signalled</div><div class="t" style="left:1012px;top:797px;font-size:12px;color:#a8a8a8;letter-spacing:-0.312px;">Signal</div><svg class="a" style="left:798px;top:816px;" width="16" height="9" viewBox="0 0 16 9"><path d="M0.7 0.7H11.5L15.3 4.5L11.5 8.3H0.7Z" fill="#7cc8ec" stroke="#6a66c4" stroke-width="1.2"/><path d="M1.4 1.4H6.2L1.4 6.2Z" fill="#dff1fa"/><path d="M6.3 7.6L11 2.3L14.3 4.5L11.2 7.6Z" fill="#5aa0c8"/></svg><div class="a" style="left:833px;top:813.8px;width:3px;height:14px;overflow:hidden"><div class="t" style="left:0px;top:1px;font-size:12px;color:#a8a8a8;">4</div></div><div class="t" style="left:852.3px;top:815px;font-size:12px;color:#a8a8a8;letter-spacing:-0.245px;">Fault</div><div class="t" style="left:932.2px;top:815px;font-size:12px;color:#a8a8a8;letter-spacing:-0.096px;">signalled</div><div class="t" style="left:1012px;top:815px;font-size:12px;color:#a8a8a8;letter-spacing:-0.312px;">Signal</div><div class="a" style="left:1272px;top:812.8px;width:11px;height:16px;overflow:hidden"><div class="t" style="left:0px;top:2px;font-size:12px;color:#a8a8a8;">Fa</div></div><svg class="a" style="left:798px;top:834px;" width="16" height="9" viewBox="0 0 16 9"><path d="M0.7 0.7H11.5L15.3 4.5L11.5 8.3H0.7Z" fill="#7cc8ec" stroke="#6a66c4" stroke-width="1.2"/><path d="M1.4 1.4H6.2L1.4 6.2Z" fill="#dff1fa"/><path d="M6.3 7.6L11 2.3L14.3 4.5L11.2 7.6Z" fill="#5aa0c8"/></svg><div class="a" style="left:833px;top:831.8px;width:3px;height:14px;overflow:hidden"><div class="t" style="left:0px;top:1px;font-size:12px;color:#a8a8a8;">5</div></div><div class="t" style="left:852.3px;top:833px;font-size:12px;color:#a8a8a8;letter-spacing:-0.245px;">Fault</div><div class="t" style="left:932.2px;top:833px;font-size:12px;color:#a8a8a8;letter-spacing:-0.096px;">signalled</div><div class="t" style="left:1012px;top:833px;font-size:12px;color:#a8a8a8;letter-spacing:-0.312px;">Signal</div><div class="a" style="left:1272px;top:830.8px;width:11px;height:16px;overflow:hidden"><div class="t" style="left:0px;top:2px;font-size:12px;color:#a8a8a8;">Fa</div></div><svg class="a" style="left:798px;top:852px;" width="16" height="9" viewBox="0 0 16 9"><path d="M0.7 0.7H11.5L15.3 4.5L11.5 8.3H0.7Z" fill="#7cc8ec" stroke="#6a66c4" stroke-width="1.2"/><path d="M1.4 1.4H6.2L1.4 6.2Z" fill="#dff1fa"/><path d="M6.3 7.6L11 2.3L14.3 4.5L11.2 7.6Z" fill="#5aa0c8"/></svg><div class="a" style="left:833px;top:849.8px;width:3px;height:14px;overflow:hidden"><div class="t" style="left:0px;top:1px;font-size:12px;color:#a8a8a8;">6</div></div><div class="t" style="left:852.3px;top:851px;font-size:12px;color:#a8a8a8;letter-spacing:-0.245px;">Fault</div><div class="t" style="left:932.2px;top:851px;font-size:12px;color:#a8a8a8;letter-spacing:-0.096px;">signalled</div><div class="t" style="left:1012px;top:851px;font-size:12px;color:#a8a8a8;letter-spacing:-0.312px;">Signal</div><div class="a" style="left:1272px;top:848.8px;width:11px;height:16px;overflow:hidden"><div class="t" style="left:0px;top:2px;font-size:12px;color:#a8a8a8;">Fa</div></div><svg class="a" style="left:798px;top:870px;" width="16" height="9" viewBox="0 0 16 9"><path d="M0.7 0.7H11.5L15.3 4.5L11.5 8.3H0.7Z" fill="#7cc8ec" stroke="#6a66c4" stroke-width="1.2"/><path d="M1.4 1.4H6.2L1.4 6.2Z" fill="#dff1fa"/><path d="M6.3 7.6L11 2.3L14.3 4.5L11.2 7.6Z" fill="#5aa0c8"/></svg><div class="a" style="left:833px;top:867.8px;width:3px;height:14px;overflow:hidden"><div class="t" style="left:0px;top:1px;font-size:12px;color:#a8a8a8;">7</div></div><div class="t" style="left:852.3px;top:869px;font-size:12px;color:#a8a8a8;letter-spacing:0.080px;">GoodHit</div><div class="t" style="left:932.2px;top:869px;font-size:12px;color:#a8a8a8;letter-spacing:-0.096px;">signalled</div><div class="t" style="left:1012px;top:869px;font-size:12px;color:#a8a8a8;letter-spacing:-0.312px;">Signal</div><svg class="a" style="left:798px;top:888px;" width="16" height="9" viewBox="0 0 16 9"><path d="M0.7 0.7H11.5L15.3 4.5L11.5 8.3H0.7Z" fill="#7cc8ec" stroke="#6a66c4" stroke-width="1.2"/><path d="M1.4 1.4H6.2L1.4 6.2Z" fill="#dff1fa"/><path d="M6.3 7.6L11 2.3L14.3 4.5L11.2 7.6Z" fill="#5aa0c8"/></svg><div class="a" style="left:833px;top:885.8px;width:3px;height:14px;overflow:hidden"><div class="t" style="left:0px;top:1px;font-size:12px;color:#a8a8a8;">8</div></div><div class="t" style="left:852.3px;top:887px;font-size:12px;color:#a8a8a8;letter-spacing:-0.538px;">GoodServe</div><div class="t" style="left:932.2px;top:887px;font-size:12px;color:#a8a8a8;letter-spacing:-0.096px;">signalled</div><div class="t" style="left:1012px;top:887px;font-size:12px;color:#a8a8a8;letter-spacing:-0.312px;">Signal</div><svg class="a" style="left:798px;top:906px;" width="16" height="9" viewBox="0 0 16 9"><path d="M0.7 0.7H11.5L15.3 4.5L11.5 8.3H0.7Z" fill="#7cc8ec" stroke="#6a66c4" stroke-width="1.2"/><path d="M1.4 1.4H6.2L1.4 6.2Z" fill="#dff1fa"/><path d="M6.3 7.6L11 2.3L14.3 4.5L11.2 7.6Z" fill="#5aa0c8"/></svg><div class="a" style="left:833px;top:903.8px;width:3px;height:14px;overflow:hidden"><div class="t" style="left:0px;top:1px;font-size:12px;color:#a8a8a8;">9</div></div><div class="t" style="left:852.3px;top:905px;font-size:12px;color:#a8a8a8;letter-spacing:0.080px;">GoodHit</div><div class="t" style="left:932.2px;top:905px;font-size:12px;color:#a8a8a8;letter-spacing:-0.096px;">signalled</div><div class="t" style="left:1012px;top:905px;font-size:12px;color:#a8a8a8;letter-spacing:-0.312px;">Signal</div><svg class="a" style="left:798px;top:924px;" width="16" height="9" viewBox="0 0 16 9"><path d="M0.7 0.7H11.5L15.3 4.5L11.5 8.3H0.7Z" fill="#7cc8ec" stroke="#6a66c4" stroke-width="1.2"/><path d="M1.4 1.4H6.2L1.4 6.2Z" fill="#dff1fa"/><path d="M6.3 7.6L11 2.3L14.3 4.5L11.2 7.6Z" fill="#5aa0c8"/></svg><div class="t" style="left:830.5px;top:923px;font-size:12px;color:#a8a8a8;">1</div><div class="t" style="left:852.3px;top:923px;font-size:12px;color:#a8a8a8;letter-spacing:-0.045px;">PointOver</div><div class="t" style="left:932.2px;top:923px;font-size:12px;color:#a8a8a8;letter-spacing:-0.096px;">signalled</div><div class="t" style="left:1012px;top:923px;font-size:12px;color:#a8a8a8;letter-spacing:-0.312px;">Signal</div><div class="a" style="left:767px;top:1010px;width:516px;height:16px;background:#f0f0f0;"></div><div class="a" style="left:784px;top:1010px;width:387.5px;height:16px;background:#cdcdcd;"></div><svg class="a" style="left:772px;top:1013.5px;" width="6" height="9" viewBox="0 0 6 9"><path d="M5.2 0.8L1.5 4.5L5.2 8.2" fill="none" stroke="#505050" stroke-width="1.8"/></svg><svg class="a" style="left:1271px;top:1013.5px;" width="6" height="9" viewBox="0 0 6 9"><path d="M0.8 0.8L4.5 4.5L0.8 8.2" fill="none" stroke="#505050" stroke-width="1.8"/></svg><div class="a" style="left:1283px;top:734px;width:6px;height:292px;background:#bbc6da;"></div><div class="a" style="left:1285px;top:878px;width:2px;height:1.5px;background:#eef2fa;"></div><div class="a" style="left:1285px;top:881px;width:2px;height:1.5px;background:#eef2fa;"></div><div class="a" style="left:1285px;top:884px;width:2px;height:1.5px;background:#eef2fa;"></div><div class="a" style="left:1289px;top:734px;width:284px;height:292px;background:#fff;"></div><div class="a" style="left:1289px;top:757px;width:284px;height:1px;background:#e3e8f3;"></div><div class="t" style="left:1294.2px;top:740px;font-size:12px;color:#000;letter-spacing:-0.137px;">Waiting Triggers</div><svg class="a" style="left:1297px;top:762px;" width="16" height="9" viewBox="0 0 16 9"><path d="M0.7 0.7H11.5L15.3 4.5L11.5 8.3H0.7Z" fill="#7cc8ec" stroke="#6a66c4" stroke-width="1.2"/><path d="M1.4 1.4H6.2L1.4 6.2Z" fill="#dff1fa"/><path d="M6.3 7.6L11 2.3L14.3 4.5L11.2 7.6Z" fill="#5aa0c8"/></svg><div class="t" style="left:1315.6px;top:762px;font-size:12px;color:#000;letter-spacing:-0.291px;">BallMissed</div><svg class="a" style="left:1297px;top:781px;" width="16" height="9" viewBox="0 0 16 9"><path d="M0.7 0.7H11.5L15.3 4.5L11.5 8.3H0.7Z" fill="#7cc8ec" stroke="#6a66c4" stroke-width="1.2"/><path d="M1.4 1.4H6.2L1.4 6.2Z" fill="#dff1fa"/><path d="M6.3 7.6L11 2.3L14.3 4.5L11.2 7.6Z" fill="#5aa0c8"/></svg><div class="t" style="left:1315.6px;top:781px;font-size:12px;color:#000;letter-spacing:-0.159px;">BallOut</div><svg class="a" style="left:1297px;top:800px;" width="16" height="9" viewBox="0 0 16 9"><path d="M0.7 0.7H11.5L15.3 4.5L11.5 8.3H0.7Z" fill="#7cc8ec" stroke="#6a66c4" stroke-width="1.2"/><path d="M1.4 1.4H6.2L1.4 6.2Z" fill="#dff1fa"/><path d="M6.3 7.6L11 2.3L14.3 4.5L11.2 7.6Z" fill="#5aa0c8"/></svg><div class="t" style="left:1315.6px;top:800px;font-size:12px;color:#000;letter-spacing:-0.275px;">CallToReceive</div><svg class="a" style="left:1297px;top:819px;" width="16" height="9" viewBox="0 0 16 9"><path d="M0.7 0.7H11.5L15.3 4.5L11.5 8.3H0.7Z" fill="#7cc8ec" stroke="#6a66c4" stroke-width="1.2"/><path d="M1.4 1.4H6.2L1.4 6.2Z" fill="#dff1fa"/><path d="M6.3 7.6L11 2.3L14.3 4.5L11.2 7.6Z" fill="#5aa0c8"/></svg><div class="t" style="left:1315.6px;top:819px;font-size:12px;color:#000;letter-spacing:-0.330px;">CallToServe</div><svg class="a" style="left:1297px;top:838px;" width="16" height="9" viewBox="0 0 16 9"><path d="M0.7 0.7H11.5L15.3 4.5L11.5 8.3H0.7Z" fill="#7cc8ec" stroke="#6a66c4" stroke-width="1.2"/><path d="M1.4 1.4H6.2L1.4 6.2Z" fill="#dff1fa"/><path d="M6.3 7.6L11 2.3L14.3 4.5L11.2 7.6Z" fill="#5aa0c8"/></svg><div class="t" style="left:1315.6px;top:838px;font-size:12px;color:#000;letter-spacing:-0.270px;">Fault</div><svg class="a" style="left:1297px;top:857px;" width="16" height="9" viewBox="0 0 16 9"><path d="M0.7 0.7H11.5L15.3 4.5L11.5 8.3H0.7Z" fill="#7cc8ec" stroke="#6a66c4" stroke-width="1.2"/><path d="M1.4 1.4H6.2L1.4 6.2Z" fill="#dff1fa"/><path d="M6.3 7.6L11 2.3L14.3 4.5L11.2 7.6Z" fill="#5aa0c8"/></svg><div class="t" style="left:1315.6px;top:857px;font-size:12px;color:#000;letter-spacing:0.130px;">GoodHit</div><svg class="a" style="left:1297px;top:876px;" width="16" height="9" viewBox="0 0 16 9"><path d="M0.7 0.7H11.5L15.3 4.5L11.5 8.3H0.7Z" fill="#7cc8ec" stroke="#6a66c4" stroke-width="1.2"/><path d="M1.4 1.4H6.2L1.4 6.2Z" fill="#dff1fa"/><path d="M6.3 7.6L11 2.3L14.3 4.5L11.2 7.6Z" fill="#5aa0c8"/></svg><div class="t" style="left:1315.6px;top:876px;font-size:12px;color:#000;letter-spacing:-0.538px;">GoodServe</div><svg class="a" style="left:1297px;top:895px;" width="16" height="9" viewBox="0 0 16 9"><path d="M0.7 0.7H11.5L15.3 4.5L11.5 8.3H0.7Z" fill="#7cc8ec" stroke="#6a66c4" stroke-width="1.2"/><path d="M1.4 1.4H6.2L1.4 6.2Z" fill="#dff1fa"/><path d="M6.3 7.6L11 2.3L14.3 4.5L11.2 7.6Z" fill="#5aa0c8"/></svg><div class="t" style="left:1315.6px;top:895px;font-size:12px;color:#000;letter-spacing:-0.120px;">PointOver</div>
<div class="a" style="left:0px;top:124px;width:1px;height:557px;background:#929292;"></div>
<div class="a" style="left:0px;top:1026px;width:1919px;height:24px;background:#293756;"></div><div class="t" style="left:2px;top:1033px;font-size:11.5px;color:#fff;letter-spacing:-0.502px;">Package:EA_Change_TestCases</div><svg class="a" style="left:0px;top:1040px;" width="60" height="10" viewBox="0 0 60 10"><path d="M13 10V8.6L30 6.6V10Z M31.2 10V6.4L53 4.2V10Z" fill="#fff"/></svg>
<svg class="a" style="left:1598px;top:1030px;" width="16" height="16" viewBox="0 0 16 16"><circle cx="8" cy="8.4" r="6.7" fill="#c6cee0" stroke="#04070e" stroke-width="1.5"/><path d="M4.6 8.4H11.4" stroke="#04070e" stroke-width="1.3"/></svg><svg class="a" style="left:1714px;top:1030px;" width="16" height="16" viewBox="0 0 16 16"><circle cx="8" cy="8.4" r="6.7" fill="#c6cee0" stroke="#04070e" stroke-width="1.5"/><path d="M4.6 8.4H11.4" stroke="#04070e" stroke-width="1.3"/><path d="M8 5V11.8" stroke="#04070e" stroke-width="1.3"/></svg><div class="a" style="left:1621px;top:1037px;width:86px;height:3px;background:#e2e2e2;"></div><svg class="a" style="left:1647px;top:1029px;" width="10" height="17" viewBox="0 0 10 17"><path d="M0.5 0.5H9.5V12L5 16.5L0.5 12Z" fill="#e4e4e4" stroke="#bdbdbd" stroke-width="1"/></svg><div class="a" style="left:1733px;top:1031px;width:190px;height:14px;background:transparent;border:1px solid #8d99bb"></div><div class="t" style="left:1742px;top:1033px;font-size:10.5px;color:#8a90a0;letter-spacing:-1.045px;">CAP</div><div class="t" style="left:1780.5px;top:1033px;font-size:10.5px;color:#fff;letter-spacing:0.794px;">NUM</div><div class="t" style="left:1826px;top:1033px;font-size:10.5px;color:#8a90a0;letter-spacing:-1.003px;">SCRL</div><div class="t" style="left:1871.5px;top:1033px;font-size:10.5px;color:#fff;letter-spacing:-0.064px;">CLOUD</div>
</body></html>
